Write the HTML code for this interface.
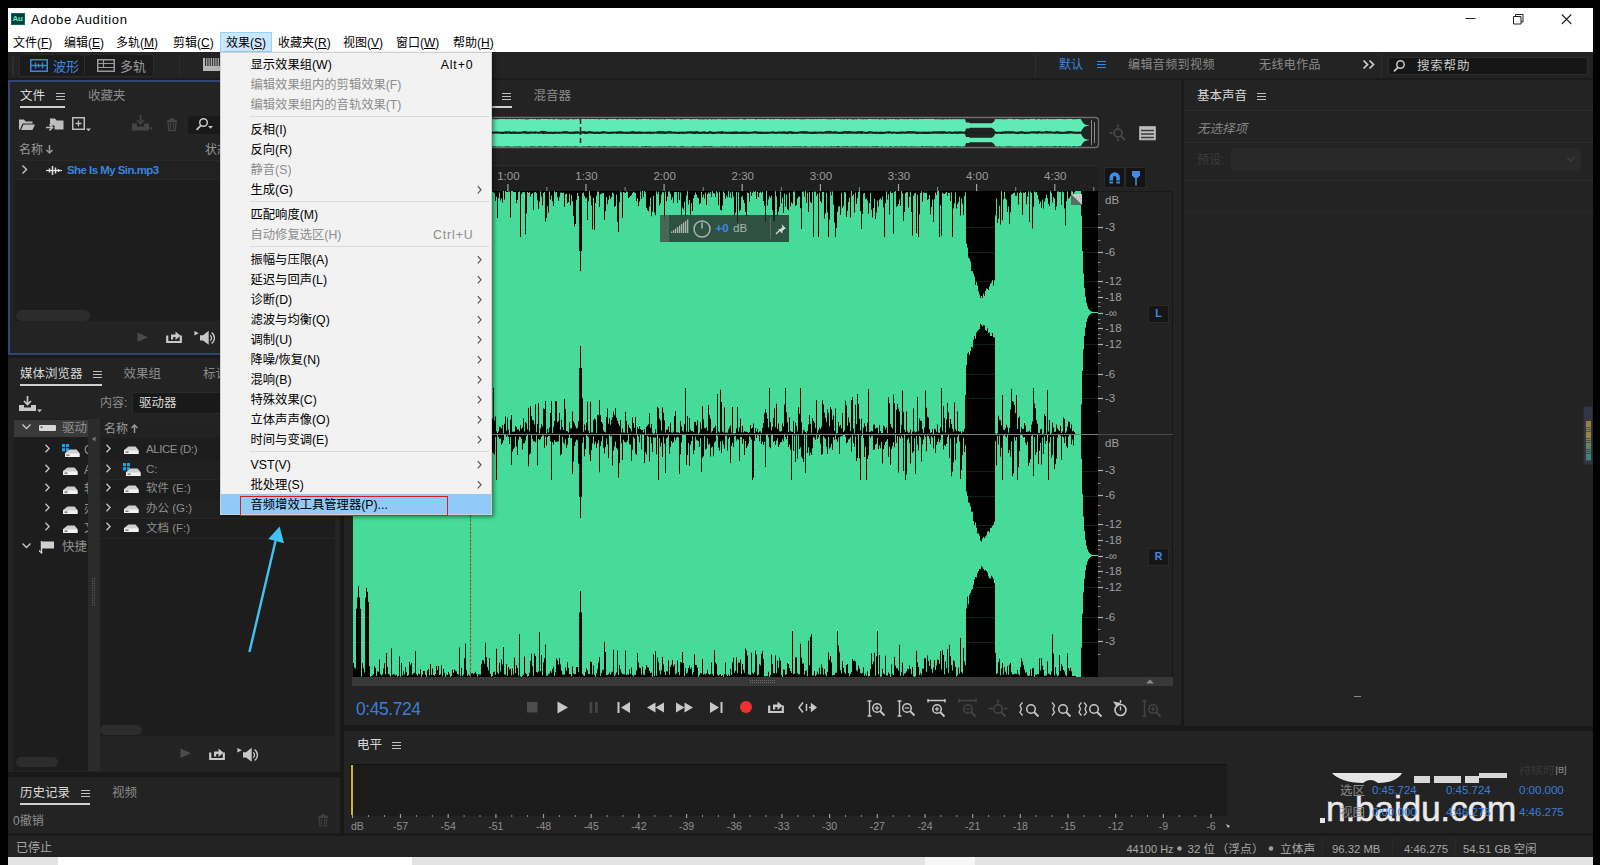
<!DOCTYPE html>
<html lang="zh-CN"><head><meta charset="utf-8"><title>Adobe Audition</title>
<style>
html,body{margin:0;padding:0;background:#000;}
body{width:1600px;height:865px;position:relative;overflow:hidden;font-family:"Liberation Sans","Noto Sans CJK SC",sans-serif;}
body>div,body>span,body>svg{position:absolute;display:block;}
span{white-space:nowrap;}
</style></head><body>
<div style="left:8px;top:8px;width:1585px;height:849px;background:#191919;"></div>
<div style="left:8px;top:8px;width:1585px;height:44px;background:#ffffff;"></div>
<div style="left:11px;top:13px;width:14px;height:12px;background:#00403a;border:1px solid #0a6b5e;box-sizing:border-box;"></div>
<span style="left:12.5px;top:14px;font-size:8px;line-height:10px;color:#5fe3c0;font-weight:bold;letter-spacing:-0.3px;">Au</span>
<span style="left:31px;top:10px;font-size:13px;line-height:19px;color:#000;letter-spacing:0.65px;">Adobe Audition</span>
<svg style="left:1460px;top:10px;" width="120" height="20" viewBox="0 0 120 20"><path d="M5.500 8.500h10" stroke="#222" stroke-width="1" fill="none"/><path d="M53.500 6.500h7.500v7.500h-7.500z M55.500 6.500v-2h7.500v7.500h-2" stroke="#222" stroke-width="1" fill="none"/><path d="M101.800 4.500l9.500 9.500 M111.300 4.500l-9.500 9.500" stroke="#222" stroke-width="1.100" fill="none"/></svg>
<div style="left:220px;top:32px;width:52px;height:20px;background:#cce8ff;border:1px solid #99d1ff;box-sizing:border-box;"></div>
<span style="left:13px;top:33.6px;font-size:12px;line-height:18px;color:#000;">文件(<u>F</u>)</span>
<span style="left:64px;top:33.6px;font-size:12px;line-height:18px;color:#000;">编辑(<u>E</u>)</span>
<span style="left:116px;top:33.6px;font-size:12px;line-height:18px;color:#000;">多轨(<u>M</u>)</span>
<span style="left:173px;top:33.6px;font-size:12px;line-height:18px;color:#000;">剪辑(<u>C</u>)</span>
<span style="left:226px;top:33.6px;font-size:12px;line-height:18px;color:#000;">效果(<u>S</u>)</span>
<span style="left:278px;top:33.6px;font-size:12px;line-height:18px;color:#000;">收藏夹(<u>R</u>)</span>
<span style="left:343px;top:33.6px;font-size:12px;line-height:18px;color:#000;">视图(<u>V</u>)</span>
<span style="left:396px;top:33.6px;font-size:12px;line-height:18px;color:#000;">窗口(<u>W</u>)</span>
<span style="left:453px;top:33.6px;font-size:12px;line-height:18px;color:#000;">帮助(<u>H</u>)</span>
<div style="left:8px;top:52px;width:1585px;height:28px;background:#232323;"></div>
<div style="left:12px;top:57px;width:2px;height:18px;background:#2e2e2e;"></div>
<div style="left:19px;top:54px;width:135px;height:23px;background:#1b1b1b;border:1px solid #2b2b2b;box-sizing:border-box;border-radius:2px;"></div>
<div style="left:84px;top:55px;width:1px;height:20px;background:#2f2f2f;"></div>
<svg style="left:30px;top:59px;" width="18" height="13" viewBox="0 0 18 13"><rect x="0.75" y="0.75" width="16.5" height="11.5" fill="none" stroke="#3b86e0" stroke-width="1.5"/><path d="M1 6.500h16 M5.500 3.500v6 M8.500 4.500v4 M12.500 3.500v6" stroke="#3b86e0" stroke-width="1.3" fill="none"/></svg>
<span style="left:53px;top:56.5px;font-size:13px;line-height:19px;color:#3b86e0;">波形</span>
<svg style="left:97px;top:59px;" width="18" height="13" viewBox="0 0 18 13"><rect x="0.75" y="0.75" width="16.5" height="11.5" fill="none" stroke="#9a9a9a" stroke-width="1.5"/><path d="M1 4.500h16 M1 8.500h16 M6.500 1v7" stroke="#9a9a9a" stroke-width="1.2" fill="none"/></svg>
<span style="left:120px;top:56.5px;font-size:13px;line-height:19px;color:#9a9a9a;">多轨</span>
<div style="left:179px;top:55px;width:1px;height:22px;background:#2c2c2c;"></div>
<svg style="left:203px;top:58px;" width="18" height="14" viewBox="0 0 18 14"><rect x="0" y="0" width="18" height="13" fill="#b5b5b5"/><rect x="2.0" y="0" width="1.2" height="8" fill="#333"/><rect x="4.3" y="0" width="1.2" height="8" fill="#333"/><rect x="6.6" y="0" width="1.2" height="8" fill="#333"/><rect x="8.9" y="0" width="1.2" height="8" fill="#333"/><rect x="11.2" y="0" width="1.2" height="8" fill="#333"/><rect x="13.5" y="0" width="1.2" height="8" fill="#333"/><rect x="15.8" y="0" width="1.2" height="8" fill="#333"/></svg>
<div style="left:8px;top:78px;width:1585px;height:2px;background:#1b1b1b;"></div>
<div style="left:1035px;top:54px;width:1px;height:24px;background:#2e2e2e;"></div>
<div style="left:1381px;top:54px;width:1px;height:24px;background:#2e2e2e;"></div>
<span style="left:1059px;top:56px;font-size:12px;line-height:18px;color:#3b86e0;">默认</span>
<svg style="left:1097px;top:60px;" width="10" height="10" viewBox="0 0 10 10"><path d="M0 1.500h9 M0 4.500h9 M0 7.500h9" stroke="#3b86e0" stroke-width="1.2"/></svg>
<span style="left:1128px;top:56px;font-size:12px;line-height:18px;color:#8a8a8a;letter-spacing:0.4px;">编辑音频到视频</span>
<span style="left:1259px;top:56px;font-size:12px;line-height:18px;color:#8a8a8a;letter-spacing:0.4px;">无线电作品</span>
<svg style="left:1362px;top:59px;" width="14" height="11" viewBox="0 0 14 11"><path d="M1.500 1.500l4 4-4 4 M7.500 1.500l4 4-4 4" stroke="#d0d0d0" stroke-width="1.7" fill="none"/></svg>
<div style="left:1388px;top:57px;width:200px;height:18px;background:#161616;border:1px solid #2c2c2c;box-sizing:border-box;"></div>
<svg style="left:1392px;top:59px;" width="14" height="14" viewBox="0 0 14 14"><circle cx="8.500" cy="5.500" r="3.700" fill="none" stroke="#c8c8c8" stroke-width="1.5"/><path d="M6 8.300l-4 4" stroke="#c8c8c8" stroke-width="1.8"/></svg>
<span style="left:1417px;top:57.25px;font-size:12.5px;line-height:18.5px;color:#c8c8c8;letter-spacing:0.8px;">搜索帮助</span>
<div style="left:8px;top:836px;width:1585px;height:21px;background:#232323;"></div>
<span style="left:16px;top:839px;font-size:12px;line-height:18px;color:#a7a7a7;">已停止</span>
<span style="left:1126.5px;top:841px;font-size:11px;line-height:17px;color:#a7a7a7;">44100 Hz</span>
<span style="left:1187.5px;top:840.75px;font-size:11.5px;line-height:17.5px;color:#a7a7a7;">32 位</span>
<span style="left:1216.5px;top:840.6px;font-size:11.8px;line-height:17.8px;color:#a7a7a7;">（浮点）</span>
<span style="left:1280px;top:840.6px;font-size:11.8px;line-height:17.8px;color:#a7a7a7;">立体声</span>
<svg style="left:1176px;top:845px;" width="100" height="8" viewBox="0 0 100 8"><circle cx="3.500" cy="3.500" r="2.300" fill="#a0a0a0"/><circle cx="95" cy="3.500" r="2.300" fill="#a0a0a0"/></svg>
<span style="left:1332px;top:840.85px;font-size:11.3px;line-height:17.3px;color:#a7a7a7;">96.32 MB</span>
<span style="left:1404px;top:840.85px;font-size:11.3px;line-height:17.3px;color:#a7a7a7;">4:46.275</span>
<span style="left:1463px;top:840.85px;font-size:11.3px;line-height:17.3px;color:#a7a7a7;">54.51 GB 空闲</span>
<div style="left:1322px;top:839px;width:1px;height:16px;background:#292929;"></div>
<div style="left:1392px;top:839px;width:1px;height:16px;background:#292929;"></div>
<div style="left:1455px;top:839px;width:1px;height:16px;background:#292929;"></div>
<div style="left:8px;top:857px;width:1585px;height:8px;background:#e3e3e3;"></div>
<div style="left:58px;top:857px;width:354px;height:8px;background:#ffffff;"></div>
<div style="left:925px;top:857px;width:50px;height:8px;background:#f6f6f6;"></div>
<div style="left:8px;top:80px;width:332px;height:275px;background:#232323;border:2px solid #2a4872;box-sizing:border-box;"></div>
<span style="left:20px;top:86.75px;font-size:12.5px;line-height:18.5px;color:#d8d8d8;">文件</span>
<div style="left:20px;top:106px;width:45px;height:2px;background:#d0d0d0;"></div>
<svg style="left:56px;top:92px;" width="10" height="10" viewBox="0 0 10 10"><path d="M0 1.500h9 M0 4.500h9 M0 7.500h9" stroke="#c0c0c0" stroke-width="1.1"/></svg>
<span style="left:88px;top:86.75px;font-size:12.5px;line-height:18.5px;color:#8c8c8c;">收藏夹</span>
<svg style="left:18px;top:116.3px;" width="18" height="15" viewBox="0 0 18 15"><path d="M1 3.500h5l1.500 2h7v2h-10l-2.500 6h-1z" fill="#bdbdbd"/><path d="M5.500 8.500h11.500l-2.500 5.500h-11.500z" fill="#bdbdbd"/></svg>
<svg style="left:45px;top:116.3px;" width="20" height="16" viewBox="0 0 20 16"><path d="M5 2.500h5l1.500 2h7v9h-9v-4h-4.500z" fill="#bdbdbd"/><path d="M1 11.500h6 M4.500 8.500l3 3-3 3" stroke="#bdbdbd" stroke-width="1.6" fill="none"/></svg>
<svg style="left:72px;top:117.3px;" width="22" height="15" viewBox="0 0 22 15"><rect x="0.75" y="0.75" width="11.500" height="11.500" fill="none" stroke="#bdbdbd" stroke-width="1.500"/><path d="M6.500 3.500v6 M3.500 6.500h6" stroke="#bdbdbd" stroke-width="1.3"/><path d="M14 11.500h5l-2.500 2.700z" fill="#bdbdbd"/></svg>
<svg style="left:130px;top:114.3px;" width="24" height="18" viewBox="0 0 24 18"><path d="M10.500 1v8 M7 6l3.500 3.500 3.500-3.500" stroke="#454545" stroke-width="1.6" fill="none"/><path d="M2 9.500h5v3h7v-3h5v7h-17z" fill="#454545"/><path d="M19 13.500h4l-2 2.500z" fill="#454545"/></svg>
<svg style="left:165px;top:116.3px;" width="14" height="16" viewBox="0 0 14 16"><path d="M2 4.500h10 M5 3h4" stroke="#454545" stroke-width="1.400"/><path d="M3 5.500h8l-0.800 9h-6.400z" fill="none" stroke="#454545" stroke-width="1.300"/><path d="M5.500 7v6 M8.500 7v6" stroke="#454545" stroke-width="1"/></svg>
<div style="left:188px;top:115.5px;width:40px;height:18.5px;background:#191919;border-radius:3px;"></div>
<svg style="left:194px;top:116.5px;" width="24" height="15" viewBox="0 0 24 15"><circle cx="9.500" cy="5.500" r="3.800" fill="none" stroke="#c8c8c8" stroke-width="1.500"/><path d="M7 8.300l-4.500 4.500" stroke="#c8c8c8" stroke-width="1.800"/><path d="M14 9h5l-2.500 2.700z" fill="#c8c8c8"/></svg>
<span style="left:19px;top:140.5px;font-size:12px;line-height:18px;color:#999;">名称</span>
<svg style="left:45px;top:144px;" width="10" height="11" viewBox="0 0 10 11"><path d="M4.500 1v8 M1.500 6l3 3 3-3" stroke="#999" stroke-width="1.500" fill="none"/></svg>
<span style="left:205px;top:140.5px;font-size:12px;line-height:18px;color:#999;">状态</span>
<div style="left:15px;top:160px;width:320px;height:161px;background:#1d1d1d;"></div>
<div style="left:15px;top:160px;width:320px;height:1px;background:#2a2a2a;"></div>
<div style="left:15px;top:161px;width:320px;height:18px;background:#212121;"></div>
<div style="left:15px;top:179px;width:320px;height:1px;background:#262626;"></div>
<svg style="left:21px;top:164px;" width="8" height="11" viewBox="0 0 8 11"><path d="M1.500 1.500l4 4-4 4" stroke="#c8c8c8" stroke-width="1.400" fill="none"/></svg>
<svg style="left:46px;top:165px;" width="16" height="11" viewBox="0 0 16 11"><path d="M0 5.500h16" stroke="#e0e0e0" stroke-width="1.200"/><path d="M3.500 3.500v4 M6.500 1v9 M9.500 2.500v6 M12.500 4v3" stroke="#e0e0e0" stroke-width="1.500"/></svg>
<span style="left:67px;top:161.75px;font-size:11.5px;line-height:17.5px;color:#3a84dc;font-weight:bold;letter-spacing:-0.550px;">She Is My Sin.mp3</span>
<div style="left:16px;top:310px;width:74px;height:11px;background:#2c2c2c;border-radius:6px;"></div>
<svg style="left:137px;top:331.5px;" width="12" height="12" viewBox="0 0 12 12"><path d="M0.500 0.500l10.500 4.800-10.500 4.800z" fill="#4b4b4b"/></svg>
<svg style="left:166px;top:329.5px;" width="16" height="14" viewBox="0 0 16 14"><path d="M1.200 5.500v6.500h13.600v-6.500" fill="none" stroke="#c8c8c8" stroke-width="2.200"/><path d="M5 9.500v-5h4.500v-3l5 4.300-5 4.300v-3h-2.300v2.400z" fill="#c8c8c8"/></svg>
<svg style="left:194px;top:330.3px;" width="24" height="16" viewBox="0 0 24 16"><path d="M0.400 1l4.400 2.200-4.400 2.200z" fill="#c8c8c8"/><path d="M6 5.200h3l5.700-4.400v14l-5.700-4.400h-3z" fill="#c8c8c8"/><path d="M16.200 5.300a3.400 3.400 0 0 1 0 5.400 M17.600 2.600a6.600 6.600 0 0 1 0 10.800" fill="none" stroke="#c8c8c8" stroke-width="1.300"/></svg>
<div style="left:8px;top:358px;width:332px;height:414px;background:#232323;"></div>
<span style="left:20px;top:365.25px;font-size:12.5px;line-height:18.5px;color:#d8d8d8;">媒体浏览器</span>
<div style="left:20px;top:384px;width:82px;height:2px;background:#d0d0d0;"></div>
<svg style="left:93px;top:370px;" width="10" height="10" viewBox="0 0 10 10"><path d="M0 1.500h9 M0 4.500h9 M0 7.500h9" stroke="#c0c0c0" stroke-width="1.1"/></svg>
<span style="left:123.5px;top:365.25px;font-size:12.5px;line-height:18.5px;color:#8c8c8c;">效果组</span>
<span style="left:203px;top:365.25px;font-size:12.5px;line-height:18.5px;color:#8c8c8c;">标记</span>
<svg style="left:18px;top:395px;" width="26" height="18" viewBox="0 0 26 18"><path d="M9.500 1v8 M6 6l3.500 3.500 3.500-3.500" stroke="#c8c8c8" stroke-width="1.700" fill="none"/><path d="M1 10h5v2.500h7v-2.500h5v6h-17z" fill="#c8c8c8"/><path d="M19 14.500h5l-2.500 2.700z" fill="#c8c8c8"/></svg>
<span style="left:100px;top:394px;font-size:12px;line-height:18px;color:#8c8c8c;">内容:</span>
<div style="left:132px;top:392px;width:204px;height:22px;background:#191919;border:1px solid #2a2a2a;box-sizing:border-box;border-radius:2px;"></div>
<span style="left:139px;top:393.75px;font-size:12.5px;line-height:18.5px;color:#d8d8d8;">驱动器</span>
<div style="left:14px;top:419px;width:74px;height:352px;background:#1d1d1d;"></div>
<div style="left:14px;top:420px;width:74px;height:17px;background:#3a3a3a;"></div>
<div style="left:88px;top:419px;width:12px;height:352px;background:#2b2b2b;"></div>
<svg style="left:91px;top:436px;" width="6" height="6" viewBox="0 0 6 6"><path d="M4.500 0.500v5l-3.500-2.500z" fill="#777"/></svg>
<svg style="left:92px;top:578px;" width="4" height="30" viewBox="0 0 4 30"><rect x="0" y="0.0" width="1" height="1.200" fill="#5a5a5a"/><rect x="2" y="0.0" width="1" height="1.200" fill="#5a5a5a"/><rect x="0" y="2.4" width="1" height="1.200" fill="#5a5a5a"/><rect x="2" y="2.4" width="1" height="1.200" fill="#5a5a5a"/><rect x="0" y="4.8" width="1" height="1.200" fill="#5a5a5a"/><rect x="2" y="4.8" width="1" height="1.200" fill="#5a5a5a"/><rect x="0" y="7.2" width="1" height="1.200" fill="#5a5a5a"/><rect x="2" y="7.2" width="1" height="1.200" fill="#5a5a5a"/><rect x="0" y="9.6" width="1" height="1.200" fill="#5a5a5a"/><rect x="2" y="9.6" width="1" height="1.200" fill="#5a5a5a"/><rect x="0" y="12.0" width="1" height="1.200" fill="#5a5a5a"/><rect x="2" y="12.0" width="1" height="1.200" fill="#5a5a5a"/><rect x="0" y="14.4" width="1" height="1.200" fill="#5a5a5a"/><rect x="2" y="14.4" width="1" height="1.200" fill="#5a5a5a"/><rect x="0" y="16.8" width="1" height="1.200" fill="#5a5a5a"/><rect x="2" y="16.8" width="1" height="1.200" fill="#5a5a5a"/><rect x="0" y="19.2" width="1" height="1.200" fill="#5a5a5a"/><rect x="2" y="19.2" width="1" height="1.200" fill="#5a5a5a"/><rect x="0" y="21.6" width="1" height="1.200" fill="#5a5a5a"/><rect x="2" y="21.6" width="1" height="1.200" fill="#5a5a5a"/><rect x="0" y="24.0" width="1" height="1.200" fill="#5a5a5a"/><rect x="2" y="24.0" width="1" height="1.200" fill="#5a5a5a"/><rect x="0" y="26.4" width="1" height="1.200" fill="#5a5a5a"/><rect x="2" y="26.4" width="1" height="1.200" fill="#5a5a5a"/></svg>
<div style="left:100px;top:419px;width:235px;height:317px;background:#1d1d1d;"></div>
<div style="left:100px;top:419px;width:235px;height:19px;background:#222222;"></div>
<span style="left:104px;top:419.5px;font-size:12px;line-height:18px;color:#999;">名称</span>
<svg style="left:130px;top:423px;" width="10" height="11" viewBox="0 0 10 11"><path d="M4.500 10v-8 M1.500 5l3-3 3 3" stroke="#999" stroke-width="1.500" fill="none"/></svg>
<svg style="left:21px;top:423px;" width="12" height="8" viewBox="0 0 12 8"><path d="M1.500 1.500l4 4 4-4" stroke="#c8c8c8" stroke-width="1.400" fill="none"/></svg>
<svg style="left:39px;top:425px;" width="18" height="8" viewBox="0 0 18 8"><rect x="0" y="0" width="17" height="6" rx="1" fill="#d8d8d8"/><rect x="1.500" y="1.500" width="2" height="1.500" fill="#555"/></svg>
<span style="left:62px;top:419.25px;font-size:12.5px;line-height:18.5px;color:#8f8f8f;width:26px;overflow:hidden;">驱动器</span>
<svg style="left:44px;top:443px;" width="8" height="11" viewBox="0 0 8 11"><path d="M1.500 1.800l3.600 3.700-3.600 3.700" stroke="#c8c8c8" stroke-width="1.300" fill="none"/></svg>
<svg style="left:62px;top:444px;" width="8" height="8" viewBox="0 0 8 8"><rect x="0" y="0" width="3" height="3.200" fill="#1fa0e8"/><rect x="4" y="0" width="3" height="3.200" fill="#1fa0e8"/><rect x="0" y="4.200" width="3" height="3.200" fill="#1fa0e8"/><rect x="4" y="4.200" width="3" height="3.200" fill="#1fa0e8"/></svg>
<svg style="left:64px;top:447px;" width="17" height="12" viewBox="0 0 17 12"><path d="M1 6l4.500-3.500h7l3 3.500v4h-14.500z" fill="#cfcfcf"/><path d="M1 6.500h14.500v3.500h-14.500z" fill="#f2f2f2"/><rect x="2.500" y="7.500" width="3" height="1.300" fill="#666"/></svg>
<span style="left:84px;top:441px;font-size:12px;line-height:18px;color:#8f8f8f;width:4px;overflow:hidden;">C</span>
<svg style="left:44px;top:462.6px;" width="8" height="11" viewBox="0 0 8 11"><path d="M1.500 1.800l3.600 3.700-3.600 3.700" stroke="#c8c8c8" stroke-width="1.300" fill="none"/></svg>
<svg style="left:62px;top:464.6px;" width="17" height="12" viewBox="0 0 17 12"><path d="M1 6l4.500-3.500h7l3 3.500v4h-14.500z" fill="#cfcfcf"/><path d="M1 6.500h14.500v3.500h-14.500z" fill="#f2f2f2"/><rect x="2.500" y="7.500" width="3" height="1.300" fill="#666"/></svg>
<span style="left:84px;top:460.6px;font-size:12px;line-height:18px;color:#8f8f8f;width:4px;overflow:hidden;">A</span>
<svg style="left:44px;top:482.2px;" width="8" height="11" viewBox="0 0 8 11"><path d="M1.500 1.800l3.600 3.700-3.600 3.700" stroke="#c8c8c8" stroke-width="1.300" fill="none"/></svg>
<svg style="left:62px;top:484.2px;" width="17" height="12" viewBox="0 0 17 12"><path d="M1 6l4.500-3.500h7l3 3.500v4h-14.500z" fill="#cfcfcf"/><path d="M1 6.500h14.500v3.500h-14.500z" fill="#f2f2f2"/><rect x="2.500" y="7.500" width="3" height="1.300" fill="#666"/></svg>
<span style="left:84px;top:480.2px;font-size:12px;line-height:18px;color:#8f8f8f;width:4px;overflow:hidden;">软</span>
<svg style="left:44px;top:501.8px;" width="8" height="11" viewBox="0 0 8 11"><path d="M1.500 1.800l3.600 3.700-3.600 3.700" stroke="#c8c8c8" stroke-width="1.300" fill="none"/></svg>
<svg style="left:62px;top:503.8px;" width="17" height="12" viewBox="0 0 17 12"><path d="M1 6l4.500-3.500h7l3 3.500v4h-14.500z" fill="#cfcfcf"/><path d="M1 6.500h14.500v3.500h-14.500z" fill="#f2f2f2"/><rect x="2.500" y="7.500" width="3" height="1.300" fill="#666"/></svg>
<span style="left:84px;top:499.8px;font-size:12px;line-height:18px;color:#8f8f8f;width:4px;overflow:hidden;">办</span>
<svg style="left:44px;top:521.4px;" width="8" height="11" viewBox="0 0 8 11"><path d="M1.500 1.800l3.600 3.700-3.600 3.700" stroke="#c8c8c8" stroke-width="1.300" fill="none"/></svg>
<svg style="left:62px;top:523.4px;" width="17" height="12" viewBox="0 0 17 12"><path d="M1 6l4.500-3.500h7l3 3.500v4h-14.500z" fill="#cfcfcf"/><path d="M1 6.500h14.500v3.500h-14.500z" fill="#f2f2f2"/><rect x="2.500" y="7.500" width="3" height="1.300" fill="#666"/></svg>
<span style="left:84px;top:519.4px;font-size:12px;line-height:18px;color:#8f8f8f;width:4px;overflow:hidden;">文</span>
<svg style="left:21px;top:542px;" width="12" height="8" viewBox="0 0 12 8"><path d="M1.500 1.500l4 4 4-4" stroke="#c8c8c8" stroke-width="1.400" fill="none"/></svg>
<svg style="left:39px;top:541px;" width="16" height="13" viewBox="0 0 16 13"><rect x="3" y="0.500" width="12" height="7" fill="#d0d0d0"/><path d="M2.500 0v12" stroke="#d0d0d0" stroke-width="1.500"/><path d="M0 9.500l3 3" stroke="#d0d0d0" stroke-width="1.200"/></svg>
<span style="left:62px;top:537.75px;font-size:12.5px;line-height:18.5px;color:#8f8f8f;width:26px;overflow:hidden;">快捷</span>
<div style="left:100px;top:459.5px;width:235px;height:1px;background:#272727;"></div>
<svg style="left:105px;top:443px;" width="8" height="11" viewBox="0 0 8 11"><path d="M1.500 1.800l3.600 3.700-3.600 3.700" stroke="#c8c8c8" stroke-width="1.300" fill="none"/></svg>
<svg style="left:123px;top:444px;" width="17" height="12" viewBox="0 0 17 12"><path d="M1 6l4.500-3.500h7l3 3.500v4h-14.500z" fill="#cfcfcf"/><path d="M1 6.500h14.500v3.500h-14.500z" fill="#f2f2f2"/><rect x="2.500" y="7.500" width="3" height="1.300" fill="#666"/></svg>
<span style="left:146px;top:441.25px;font-size:11.5px;line-height:17.5px;color:#8f8f8f;letter-spacing:-0.450px;">ALICE (D:)</span>
<div style="left:100px;top:479.1px;width:235px;height:1px;background:#272727;"></div>
<div style="left:100px;top:460.1px;width:235px;height:19px;background:#202020;"></div>
<svg style="left:105px;top:462.6px;" width="8" height="11" viewBox="0 0 8 11"><path d="M1.500 1.800l3.600 3.700-3.600 3.700" stroke="#c8c8c8" stroke-width="1.300" fill="none"/></svg>
<svg style="left:123px;top:462.6px;" width="8" height="8" viewBox="0 0 8 8"><rect x="0" y="0" width="3" height="3.200" fill="#1fa0e8"/><rect x="4" y="0" width="3" height="3.200" fill="#1fa0e8"/><rect x="0" y="4.200" width="3" height="3.200" fill="#1fa0e8"/><rect x="4" y="4.200" width="3" height="3.200" fill="#1fa0e8"/></svg>
<svg style="left:125px;top:465.6px;" width="17" height="12" viewBox="0 0 17 12"><path d="M1 6l4.500-3.500h7l3 3.500v4h-14.500z" fill="#cfcfcf"/><path d="M1 6.500h14.500v3.500h-14.500z" fill="#f2f2f2"/><rect x="2.500" y="7.500" width="3" height="1.300" fill="#666"/></svg>
<span style="left:146px;top:460.85px;font-size:11.5px;line-height:17.5px;color:#8f8f8f;">C:</span>
<div style="left:100px;top:498.7px;width:235px;height:1px;background:#272727;"></div>
<svg style="left:105px;top:482.2px;" width="8" height="11" viewBox="0 0 8 11"><path d="M1.500 1.800l3.600 3.700-3.600 3.700" stroke="#c8c8c8" stroke-width="1.300" fill="none"/></svg>
<svg style="left:123px;top:483.2px;" width="17" height="12" viewBox="0 0 17 12"><path d="M1 6l4.500-3.500h7l3 3.500v4h-14.500z" fill="#cfcfcf"/><path d="M1 6.500h14.500v3.500h-14.500z" fill="#f2f2f2"/><rect x="2.500" y="7.500" width="3" height="1.300" fill="#666"/></svg>
<span style="left:146px;top:480.45px;font-size:11.5px;line-height:17.5px;color:#8f8f8f;">软件 (E:)</span>
<div style="left:100px;top:518.3px;width:235px;height:1px;background:#272727;"></div>
<div style="left:100px;top:499.3px;width:235px;height:19px;background:#202020;"></div>
<svg style="left:105px;top:501.8px;" width="8" height="11" viewBox="0 0 8 11"><path d="M1.500 1.800l3.600 3.700-3.600 3.700" stroke="#c8c8c8" stroke-width="1.300" fill="none"/></svg>
<svg style="left:123px;top:502.8px;" width="17" height="12" viewBox="0 0 17 12"><path d="M1 6l4.500-3.500h7l3 3.500v4h-14.500z" fill="#cfcfcf"/><path d="M1 6.500h14.500v3.500h-14.500z" fill="#f2f2f2"/><rect x="2.500" y="7.500" width="3" height="1.300" fill="#666"/></svg>
<span style="left:146px;top:500.05px;font-size:11.5px;line-height:17.5px;color:#8f8f8f;">办公 (G:)</span>
<div style="left:100px;top:537.9px;width:235px;height:1px;background:#272727;"></div>
<svg style="left:105px;top:521.4px;" width="8" height="11" viewBox="0 0 8 11"><path d="M1.500 1.800l3.600 3.700-3.600 3.700" stroke="#c8c8c8" stroke-width="1.300" fill="none"/></svg>
<svg style="left:123px;top:522.4px;" width="17" height="12" viewBox="0 0 17 12"><path d="M1 6l4.500-3.500h7l3 3.500v4h-14.500z" fill="#cfcfcf"/><path d="M1 6.500h14.500v3.500h-14.500z" fill="#f2f2f2"/><rect x="2.500" y="7.500" width="3" height="1.300" fill="#666"/></svg>
<span style="left:146px;top:519.65px;font-size:11.5px;line-height:17.5px;color:#8f8f8f;">文档 (F:)</span>
<div style="left:100px;top:725px;width:42px;height:10px;background:#2c2c2c;border-radius:5px;"></div>
<div style="left:16px;top:757px;width:42px;height:10px;background:#2c2c2c;border-radius:5px;"></div>
<svg style="left:180px;top:748.3px;" width="12" height="12" viewBox="0 0 12 12"><path d="M0.500 0.500l10.500 4.800-10.500 4.800z" fill="#4b4b4b"/></svg>
<svg style="left:209px;top:747px;" width="16" height="14" viewBox="0 0 16 14"><path d="M1.200 5.500v6.500h13.600v-6.500" fill="none" stroke="#c8c8c8" stroke-width="2.200"/><path d="M5 9.500v-5h4.500v-3l5 4.300-5 4.300v-3h-2.300v2.400z" fill="#c8c8c8"/></svg>
<svg style="left:237px;top:747.3px;" width="24" height="16" viewBox="0 0 24 16"><path d="M0.400 1l4.400 2.200-4.400 2.200z" fill="#c8c8c8"/><path d="M6 5.200h3l5.700-4.400v14l-5.700-4.400h-3z" fill="#c8c8c8"/><path d="M16.200 5.300a3.400 3.400 0 0 1 0 5.400 M17.600 2.600a6.600 6.600 0 0 1 0 10.800" fill="none" stroke="#c8c8c8" stroke-width="1.300"/></svg>
<div style="left:8px;top:777px;width:332px;height:56px;background:#232323;"></div>
<span style="left:20px;top:784.25px;font-size:12.5px;line-height:18.5px;color:#d8d8d8;">历史记录</span>
<div style="left:20px;top:803px;width:70px;height:2px;background:#d0d0d0;"></div>
<svg style="left:81px;top:789px;" width="10" height="10" viewBox="0 0 10 10"><path d="M0 1.500h9 M0 4.500h9 M0 7.500h9" stroke="#c0c0c0" stroke-width="1.1"/></svg>
<span style="left:112px;top:784.25px;font-size:12.5px;line-height:18.5px;color:#8c8c8c;">视频</span>
<span style="left:13px;top:811.5px;font-size:12px;line-height:18px;color:#8f8f8f;">0撤销</span>
<svg style="left:317px;top:813px;" width="12" height="14" viewBox="0 0 12 14"><path d="M1 3.500h10 M4 2h4" stroke="#3f3f3f" stroke-width="1.300"/><path d="M2.200 4.500h7.600l-0.700 8.500h-6.200z" fill="none" stroke="#3f3f3f" stroke-width="1.200"/><path d="M4.500 6v5.500 M7.500 6v5.500" stroke="#3f3f3f" stroke-width="1"/></svg>
<div style="left:344px;top:80px;width:837px;height:645px;background:#232323;"></div>
<span style="left:356px;top:86.75px;font-size:12.5px;line-height:18.5px;color:#d8d8d8;width:134px;overflow:hidden;">编辑器: She Is My Sin.mp3</span>
<div style="left:356px;top:106px;width:156px;height:2px;background:#d0d0d0;"></div>
<svg style="left:501.5px;top:92px;" width="10" height="10" viewBox="0 0 10 10"><path d="M0 1.500h9 M0 4.500h9 M0 7.500h9" stroke="#c0c0c0" stroke-width="1.1"/></svg>
<span style="left:533.5px;top:86.75px;font-size:12.5px;line-height:18.5px;color:#8c8c8c;">混音器</span>
<svg style="left:0;top:0" width="1600" height="865" viewBox="0 0 1600 865"><rect x="353" y="191" width="745" height="486" fill="#000"/><path d="M353 227.500H1098" stroke="#10241b" stroke-width="1"/><path d="M353 252.500H1098" stroke="#10241b" stroke-width="1"/><path d="M353 281.500H1098" stroke="#10241b" stroke-width="1"/><path d="M353 344.500H1098" stroke="#10241b" stroke-width="1"/><path d="M353 374.500H1098" stroke="#10241b" stroke-width="1"/><path d="M353 398.500H1098" stroke="#10241b" stroke-width="1"/><path d="M353 471.500H1098" stroke="#10241b" stroke-width="1"/><path d="M353 496.500H1098" stroke="#10241b" stroke-width="1"/><path d="M353 525.500H1098" stroke="#10241b" stroke-width="1"/><path d="M353 587.500H1098" stroke="#10241b" stroke-width="1"/><path d="M353 617.500H1098" stroke="#10241b" stroke-width="1"/><path d="M353 642.500H1098" stroke="#10241b" stroke-width="1"/><path d="M353,312.5V220.3h1V192.0h1V192.0h1V192.2h1V236.7h1V221.6h1V191.7h1V198.3h1V203.9h1V195.9h1V193.8h1V195.4h1V213.2h1V211.5h1V236.1h1V191.1h1V196.0h1V195.6h1V194.8h1V194.4h1V191.3h1V195.3h1V216.4h1V191.8h1V191.2h1V191.5h1V192.6h1V191.5h1V191.9h1V192.1h1V191.3h1V206.3h1V191.4h1V224.8h1V191.5h1V192.6h1V191.4h1V212.5h1V205.2h1V197.5h1V200.7h1V191.7h1V192.3h1V192.1h1V218.2h1V214.9h1V201.7h1V192.8h1V192.6h1V192.4h1V191.8h1V192.1h1V192.2h1V192.3h1V207.1h1V201.0h1V202.6h1V191.5h1V192.2h1V203.5h1V200.4h1V191.9h1V198.5h1V195.8h1V193.8h1V192.7h1V194.9h1V197.4h1V212.1h1V192.3h1V191.1h1V208.9h1V211.4h1V202.2h1V192.3h1V192.9h1V192.1h1V195.9h1V202.9h1V191.8h1V191.2h1V202.1h1V215.0h1V204.5h1V192.4h1V217.8h1V210.2h1V192.8h1V200.0h1V210.2h1V202.2h1V199.3h1V192.7h1V192.0h1V195.2h1V212.7h1V212.1h1V191.4h1V194.5h1V223.5h1V209.8h1V192.0h1V226.7h1V212.8h1V192.6h1V202.2h1V209.6h1V191.5h1V191.7h1V200.3h1V197.7h1V197.4h1V194.6h1V192.7h1V191.5h1V197.0h1V191.4h1V205.5h1V191.2h1V198.3h1V203.7h1V200.7h1V192.0h1V191.6h1V193.8h1V191.4h1V193.6h1V191.9h1V198.1h1V195.3h1V206.2h1V229.5h1V192.6h1V202.3h1V193.0h1V192.8h1V217.6h1V214.0h1V191.8h1V191.8h1V192.3h1V192.9h1V200.7h1V196.6h1V218.0h1V198.1h1V192.5h1V200.6h1V198.6h1V202.6h1V191.1h1V199.5h1V191.1h1V192.1h1V191.9h1V191.6h1V191.5h1V217.6h1V191.1h1V191.1h1V192.0h1V192.0h1V191.9h1V203.0h1V199.7h1V191.9h1V191.5h1V237.0h1V193.8h1V192.6h1V192.1h1V192.2h1V234.3h1V213.2h1V191.9h1V193.1h1V192.1h1V196.6h1V194.1h1V193.2h1V210.1h1V192.3h1V192.1h1V193.0h1V200.3h1V208.8h1V201.4h1V191.6h1V196.4h1V205.3h1V192.8h1V191.9h1V221.6h1V217.7h1V206.3h1V212.5h1V191.4h1V199.5h1V195.4h1V201.3h1V205.9h1V191.2h1V192.5h1V191.9h1V197.1h1V200.8h1V196.7h1V192.7h1V192.6h1V192.9h1V192.4h1V206.7h1V194.3h1V193.5h1V203.1h1V201.9h1V194.1h1V205.3h1V195.1h1V201.3h1V216.0h1V226.3h1V223.9h1V199.7h1V193.0h1V196.1h1V251.0h1V271.0h1V251.0h1V193.3h1V192.6h1V196.1h1V198.2h1V197.7h1V219.9h1V201.3h1V191.3h1V195.6h1V205.2h1V229.3h1V197.5h1V230.1h1V203.1h1V195.6h1V191.8h1V191.4h1V207.0h1V194.3h1V193.8h1V193.2h1V193.1h1V219.7h1V211.1h1V197.1h1V204.3h1V199.8h1V195.6h1V199.0h1V197.0h1V192.5h1V193.4h1V206.8h1V205.9h1V194.5h1V221.5h1V231.9h1V201.9h1V191.5h1V192.6h1V217.7h1V192.1h1V192.5h1V193.0h1V191.6h1V191.8h1V198.0h1V196.9h1V196.0h1V194.9h1V193.0h1V191.8h1V192.5h1V193.0h1V201.0h1V198.3h1V205.9h1V201.5h1V191.6h1V198.9h1V191.1h1V197.0h1V191.1h1V192.3h1V207.7h1V210.1h1V211.2h1V206.6h1V197.5h1V216.3h1V211.3h1V195.8h1V212.8h1V215.2h1V191.4h1V194.0h1V191.6h1V205.5h1V203.3h1V194.6h1V192.3h1V192.3h1V220.2h1V191.6h1V201.2h1V196.7h1V191.5h1V191.6h1V193.8h1V199.8h1V197.2h1V202.8h1V192.3h1V192.0h1V192.0h1V202.9h1V191.9h1V200.0h1V192.6h1V215.1h1V207.4h1V209.5h1V201.5h1V215.9h1V195.6h1V191.2h1V204.4h1V199.9h1V214.8h1V203.0h1V211.0h1V198.3h1V195.1h1V192.5h1V194.5h1V197.4h1V197.9h1V204.2h1V203.1h1V191.8h1V197.3h1V194.6h1V198.5h1V192.4h1V204.7h1V193.8h1V192.4h1V193.4h1V191.7h1V197.1h1V191.2h1V193.2h1V193.3h1V197.1h1V191.3h1V192.5h1V205.1h1V191.8h1V209.7h1V210.5h1V205.5h1V191.4h1V192.9h1V198.4h1V195.5h1V197.2h1V191.3h1V197.2h1V192.2h1V197.9h1V191.7h1V196.5h1V215.5h1V212.4h1V191.9h1V223.1h1V192.3h1V211.3h1V210.1h1V196.9h1V195.8h1V200.1h1V203.0h1V211.8h1V215.6h1V192.4h1V192.9h1V201.4h1V191.6h1V195.8h1V192.7h1V191.2h1V191.9h1V191.3h1V198.9h1V191.8h1V196.9h1V192.7h1V191.8h1V192.7h1V191.8h1V201.1h1V205.7h1V222.1h1V191.1h1V205.5h1V199.2h1V196.0h1V198.1h1V195.4h1V210.1h1V221.2h1V220.9h1V191.3h1V196.5h1V215.7h1V211.4h1V207.1h1V191.8h1V202.9h1V197.6h1V212.7h1V193.4h1V206.6h1V194.6h1V209.3h1V210.3h1V192.5h1V206.3h1V202.3h1V203.5h1V191.7h1V191.6h1V206.1h1V205.0h1V198.6h1V196.7h1V196.4h1V208.2h1V229.1h1V191.8h1V191.5h1V196.5h1V191.3h1V202.8h1V192.7h1V212.1h1V191.9h1V201.9h1V202.9h1V192.2h1V237.0h1V191.6h1V191.8h1V195.9h1V193.8h1V237.0h1V192.7h1V201.1h1V202.7h1V192.1h1V191.9h1V218.5h1V213.3h1V192.7h1V212.2h1V237.0h1V219.5h1V191.4h1V195.2h1V191.6h1V204.4h1V222.4h1V237.0h1V228.0h1V211.8h1V206.4h1V206.3h1V214.8h1V192.7h1V207.8h1V205.7h1V191.9h1V192.4h1V216.7h1V210.7h1V201.9h1V197.6h1V217.4h1V191.0h1V195.9h1V194.2h1V212.4h1V192.4h1V203.7h1V198.1h1V191.8h1V191.3h1V210.8h1V229.1h1V213.9h1V193.4h1V193.1h1V199.2h1V198.4h1V200.4h1V213.6h1V203.1h1V192.7h1V209.8h1V217.6h1V208.1h1V198.6h1V219.1h1V212.5h1V200.5h1V206.6h1V199.5h1V198.2h1V199.8h1V196.6h1V207.2h1V237.0h1V202.9h1V191.6h1V199.6h1V194.3h1V214.2h1V191.6h1V193.0h1V192.7h1V233.8h1V192.1h1V191.0h1V206.8h1V206.0h1V203.9h1V199.2h1V205.8h1V191.2h1V193.5h1V221.0h1V211.9h1V193.1h1V192.3h1V192.0h1V207.5h1V196.8h1V191.7h1V212.1h1V235.5h1V195.7h1V193.5h1V192.7h1V233.1h1V194.8h1V237.0h1V214.3h1V192.9h1V191.2h1V201.8h1V192.5h1V192.8h1V192.9h1V192.7h1V200.0h1V199.0h1V195.1h1V214.3h1V206.8h1V199.6h1V221.9h1V199.2h1V192.5h1V195.0h1V191.2h1V191.1h1V237.0h1V204.8h1V235.8h1V192.7h1V193.4h1V194.1h1V192.7h1V192.1h1V195.8h1V192.9h1V192.9h1V200.9h1V192.2h1V237.0h1V208.3h1V203.3h1V192.2h1V208.4h1V204.1h1V202.0h1V196.7h1V215.4h1V198.5h1V203.4h1V215.1h1V195.9h1V192.3h1V243.4h1V247.5h1V257.6h1V258.8h1V261.6h1V271.2h1V270.9h1V273.8h1V276.4h1V284.8h1V281.9h1V285.6h1V291.3h1V294.5h1V298.0h1V296.1h1V297.8h1V293.6h1V296.1h1V291.0h1V288.6h1V288.9h1V290.1h1V286.6h1V283.7h1V282.5h1V280.0h1V285.6h1V280.2h1V215.3h1V198.6h1V223.0h1V218.4h1V205.7h1V224.6h1V191.2h1V220.3h1V199.3h1V192.1h1V198.4h1V199.4h1V212.0h1V206.5h1V223.9h1V212.2h1V194.4h1V194.1h1V192.9h1V192.6h1V195.7h1V195.7h1V192.2h1V204.4h1V193.0h1V191.4h1V193.0h1V214.7h1V192.6h1V192.9h1V192.0h1V204.3h1V196.6h1V191.4h1V221.7h1V191.6h1V192.9h1V228.6h1V207.1h1V191.4h1V192.2h1V192.1h1V194.8h1V199.2h1V203.8h1V201.4h1V208.0h1V199.5h1V208.5h1V201.5h1V198.2h1V194.6h1V198.0h1V204.0h1V205.9h1V191.3h1V193.0h1V202.5h1V197.0h1V198.5h1V210.0h1V206.3h1V191.6h1V191.6h1V191.9h1V191.8h1V204.8h1V191.6h1V192.3h1V208.5h1V225.6h1V201.0h1V191.6h1V198.6h1V197.7h1V196.0h1V191.2h1V191.4h1V195.0h1V192.5h1V191.0h1V191.0h1V191.0h1V191.0h1V191.0h1V191.0h1V215.7h1V251.1h1V273.5h1V287.7h1V296.8h1V302.5h1V306.2h1V308.5h1V309.9h1V310.9h1V311.5h1V311.8h1V311.9h1V311.9h1V311.9h1V311.9h1V311.9h1V312.5V313.1h-1V313.1h-1V313.1h-1V313.1h-1V313.1h-1V313.1h-1V313.5h-1V314.0h-1V314.9h-1V316.3h-1V318.5h-1V322.0h-1V327.4h-1V336.0h-1V349.5h-1V370.9h-1V404.5h-1V434.0h-1V434.0h-1V434.0h-1V434.0h-1V434.0h-1V433.7h-1V432.0h-1V430.7h-1V431.3h-1V424.6h-1V428.4h-1V422.1h-1V421.6h-1V426.7h-1V431.6h-1V433.0h-1V419.1h-1V417.4h-1V431.6h-1V433.1h-1V425.7h-1V431.0h-1V429.8h-1V428.5h-1V424.8h-1V431.7h-1V432.1h-1V427.5h-1V422.4h-1V432.9h-1V433.9h-1V420.1h-1V431.5h-1V390.1h-1V433.5h-1V415.9h-1V414.3h-1V433.2h-1V433.9h-1V428.7h-1V429.5h-1V433.0h-1V433.1h-1V423.8h-1V420.2h-1V408.2h-1V403.4h-1V388.0h-1V421.4h-1V424.7h-1V432.3h-1V430.7h-1V431.4h-1V431.7h-1V432.1h-1V425.6h-1V423.1h-1V428.9h-1V429.0h-1V427.3h-1V432.6h-1V416.6h-1V418.0h-1V429.0h-1V395.0h-1V413.2h-1V405.1h-1V402.1h-1V401.0h-1V388.8h-1V409.4h-1V428.0h-1V432.7h-1V427.6h-1V424.7h-1V428.3h-1V430.2h-1V429.4h-1V394.9h-1V425.6h-1V420.5h-1V419.7h-1V415.7h-1V433.2h-1V433.9h-1V433.4h-1V337.6h-1V337.0h-1V333.1h-1V335.9h-1V336.0h-1V332.4h-1V333.1h-1V328.5h-1V331.1h-1V329.9h-1V325.6h-1V325.3h-1V326.3h-1V324.9h-1V323.8h-1V328.9h-1V329.9h-1V331.1h-1V332.5h-1V338.7h-1V336.0h-1V339.8h-1V347.4h-1V346.7h-1V351.0h-1V355.1h-1V352.4h-1V353.7h-1V365.2h-1V394.9h-1V428.8h-1V431.8h-1V431.5h-1V433.2h-1V431.4h-1V431.8h-1V431.1h-1V411.6h-1V431.2h-1V429.4h-1V402.5h-1V431.5h-1V428.8h-1V424.1h-1V419.1h-1V427.7h-1V412.6h-1V402.9h-1V419.6h-1V432.5h-1V417.9h-1V406.2h-1V431.5h-1V388.0h-1V427.3h-1V432.7h-1V432.8h-1V424.4h-1V431.8h-1V429.5h-1V428.7h-1V433.9h-1V429.2h-1V432.5h-1V432.7h-1V429.2h-1V417.7h-1V416.7h-1V407.7h-1V390.6h-1V427.6h-1V432.9h-1V429.2h-1V421.2h-1V420.5h-1V418.8h-1V431.3h-1V397.0h-1V431.8h-1V432.4h-1V431.4h-1V408.2h-1V431.8h-1V434.0h-1V429.4h-1V432.4h-1V432.7h-1V431.4h-1V411.6h-1V432.1h-1V429.7h-1V412.2h-1V390.5h-1V425.1h-1V432.9h-1V411.5h-1V408.7h-1V403.9h-1V409.7h-1V433.1h-1V403.3h-1V394.5h-1V428.5h-1V427.1h-1V424.1h-1V403.3h-1V397.2h-1V433.2h-1V427.2h-1V429.6h-1V426.6h-1V425.7h-1V432.9h-1V433.3h-1V430.9h-1V425.0h-1V433.0h-1V428.1h-1V427.8h-1V428.5h-1V424.5h-1V424.7h-1V431.5h-1V430.7h-1V431.4h-1V431.9h-1V389.2h-1V422.7h-1V431.8h-1V426.2h-1V423.5h-1V427.8h-1V433.4h-1V418.8h-1V430.6h-1V419.0h-1V404.1h-1V393.9h-1V424.3h-1V404.8h-1V433.6h-1V428.7h-1V397.2h-1V399.9h-1V431.2h-1V422.7h-1V417.4h-1V425.8h-1V405.6h-1V400.7h-1V430.4h-1V432.1h-1V413.3h-1V428.5h-1V424.9h-1V426.4h-1V422.0h-1V432.9h-1V433.5h-1V408.5h-1V431.1h-1V415.6h-1V419.8h-1V409.6h-1V406.9h-1V426.6h-1V413.0h-1V409.5h-1V422.1h-1V418.0h-1V412.8h-1V404.5h-1V400.4h-1V426.7h-1V429.3h-1V427.8h-1V430.1h-1V432.7h-1V400.3h-1V428.0h-1V422.8h-1V421.0h-1V418.2h-1V432.8h-1V423.8h-1V415.2h-1V424.6h-1V431.0h-1V433.3h-1V432.0h-1V430.8h-1V429.8h-1V433.8h-1V422.2h-1V388.0h-1V414.0h-1V407.2h-1V431.5h-1V426.0h-1V422.8h-1V433.4h-1V421.3h-1V432.0h-1V431.8h-1V431.0h-1V417.4h-1V432.1h-1V422.4h-1V412.3h-1V388.0h-1V404.7h-1V426.4h-1V423.4h-1V431.1h-1V431.8h-1V431.2h-1V423.5h-1V429.0h-1V403.8h-1V427.2h-1V408.2h-1V418.1h-1V426.7h-1V430.6h-1V422.1h-1V388.0h-1V427.6h-1V418.8h-1V413.0h-1V409.2h-1V413.6h-1V423.0h-1V427.9h-1V432.9h-1V431.4h-1V431.4h-1V432.5h-1V429.1h-1V431.8h-1V428.3h-1V433.0h-1V423.6h-1V427.4h-1V428.7h-1V425.1h-1V432.2h-1V433.0h-1V432.0h-1V431.7h-1V431.8h-1V431.3h-1V432.5h-1V426.1h-1V432.6h-1V418.7h-1V427.6h-1V431.7h-1V407.0h-1V428.5h-1V432.9h-1V433.6h-1V433.5h-1V407.1h-1V432.8h-1V425.5h-1V427.5h-1V429.5h-1V432.8h-1V432.5h-1V432.8h-1V407.5h-1V432.6h-1V431.5h-1V402.0h-1V389.8h-1V432.5h-1V431.6h-1V393.9h-1V433.3h-1V425.7h-1V427.5h-1V428.4h-1V431.1h-1V432.5h-1V418.9h-1V415.2h-1V405.3h-1V430.8h-1V427.0h-1V428.6h-1V427.9h-1V419.6h-1V406.2h-1V429.1h-1V422.2h-1V432.6h-1V434.0h-1V420.3h-1V425.4h-1V421.9h-1V421.7h-1V432.1h-1V430.9h-1V430.9h-1V429.8h-1V417.9h-1V432.1h-1V416.1h-1V431.7h-1V388.0h-1V424.3h-1V431.8h-1V430.7h-1V426.6h-1V421.2h-1V433.1h-1V432.2h-1V432.4h-1V432.2h-1V411.3h-1V416.3h-1V431.6h-1V432.7h-1V432.5h-1V422.7h-1V431.9h-1V426.5h-1V429.7h-1V429.7h-1V432.4h-1V420.4h-1V412.8h-1V407.6h-1V430.8h-1V420.7h-1V418.6h-1V408.3h-1V406.8h-1V433.6h-1V429.5h-1V433.6h-1V433.7h-1V432.7h-1V424.1h-1V427.7h-1V413.6h-1V424.3h-1V425.5h-1V426.7h-1V433.7h-1V429.2h-1V432.5h-1V430.1h-1V429.8h-1V429.0h-1V426.0h-1V428.9h-1V427.1h-1V433.7h-1V416.9h-1V427.9h-1V423.3h-1V417.4h-1V431.6h-1V428.9h-1V427.8h-1V424.7h-1V432.9h-1V421.1h-1V411.7h-1V432.8h-1V432.6h-1V428.5h-1V432.4h-1V420.1h-1V426.3h-1V423.7h-1V420.7h-1V417.7h-1V408.1h-1V415.2h-1V411.7h-1V417.6h-1V419.9h-1V424.8h-1V418.2h-1V423.8h-1V408.5h-1V417.1h-1V432.5h-1V432.1h-1V430.4h-1V423.6h-1V422.0h-1V415.3h-1V400.1h-1V415.2h-1V414.7h-1V432.9h-1V419.6h-1V418.6h-1V419.9h-1V432.6h-1V432.6h-1V401.7h-1V433.0h-1V430.7h-1V401.7h-1V422.9h-1V430.6h-1V424.5h-1V431.7h-1V398.0h-1V368.0h-1V346.0h-1V368.0h-1V421.3h-1V427.8h-1V428.6h-1V426.2h-1V423.4h-1V421.2h-1V411.4h-1V428.3h-1V428.5h-1V422.3h-1V432.4h-1V431.2h-1V431.0h-1V408.9h-1V398.8h-1V430.1h-1V426.9h-1V419.7h-1V429.7h-1V412.9h-1V420.9h-1V422.2h-1V401.6h-1V400.9h-1V421.1h-1V427.1h-1V432.9h-1V401.0h-1V413.0h-1V427.4h-1V432.5h-1V428.8h-1V433.5h-1V401.1h-1V409.1h-1V408.5h-1V426.4h-1V423.9h-1V428.5h-1V433.4h-1V403.1h-1V424.0h-1V432.3h-1V404.2h-1V424.5h-1V420.6h-1V419.9h-1V416.3h-1V405.9h-1V431.4h-1V407.8h-1V429.6h-1V423.4h-1V422.1h-1V431.6h-1V418.6h-1V427.6h-1V429.1h-1V425.3h-1V431.3h-1V429.5h-1V429.2h-1V427.0h-1V426.3h-1V431.7h-1V431.8h-1V431.7h-1V414.9h-1V419.7h-1V433.9h-1V429.6h-1V417.7h-1V430.8h-1V416.6h-1V423.7h-1V433.6h-1V425.1h-1V428.6h-1V427.3h-1V426.6h-1V431.6h-1V433.1h-1V431.6h-1V416.5h-1V420.5h-1V388.0h-1V418.8h-1V432.3h-1V431.6h-1V433.0h-1V432.2h-1V429.9h-1V429.5h-1V417.0h-1V406.8h-1V420.6h-1V411.8h-1V423.3h-1V414.7h-1V431.2h-1V388.0h-1V424.2h-1V426.3h-1V412.3h-1V420.5h-1V433.3h-1V416.3h-1V423.5h-1V409.1h-1V388.0h-1V401.3h-1V424.3h-1V412.5h-1V409.6h-1V393.5h-1V432.4h-1V418.9h-1V413.0h-1V396.9h-1V431.0h-1V421.7h-1V416.6h-1V432.7h-1V432.5h-1V433.4h-1V419.6h-1V398.0h-1V395.0h-1V421.4h-1V425.7h-1V431.4h-1V431.0h-1V433.5h-1V425.8h-1V411.9h-1V423.9h-1V423.1h-1V428.2h-1V431.4h-1V430.0h-1V422.5h-1V426.9h-1V424.4h-1V417.6h-1V431.1h-1V429.5h-1V400.5h-1V433.2h-1V429.7h-1V409.0h-1V431.2h-1V433.1h-1V432.8h-1V403.7h-1V428.2h-1V421.1h-1V429.7h-1V433.6h-1V433.0h-1V430.7h-1V432.1h-1V431.5h-1V433.0h-1V429.6h-1V432.5h-1V431.7h-1V432.7h-1V432.6h-1V399.4h-1V431.3h-1V432.0h-1V396.6h-1V431.6h-1V424.6h-1V411.4h-1V407.8h-1V395.0h-1V389.8h-1V406.5h-1V420.5h-1V426.8h-1V402.8h-1V408.4h-1V429.0h-1V426.6h-1V422.0h-1V428.5h-1V397.8h-1V430.7h-1V433.5h-1V431.5h-1V431.2h-1V421.6h-1V413.6h-1V428.5h-1V430.6h-1V424.1h-1V430.4h-1V400.3h-1V416.6h-1V429.5h-1V433.0h-1V433.7h-1V407.9h-1V432.2h-1V433.8h-1V431.8h-1V433.7h-1V422.8h-1V431.3h-1V427.4h-1V423.6h-1V421.8h-1V428.0h-1V423.0h-1V431.0h-1V420.1h-1V411.8h-1V433.1h-1V428.1h-1V424.6h-1V432.3h-1V393.7h-1V423.7h-1V432.2h-1V432.9h-1Z" fill="#46db98"/><path d="M353,555.5V461.8h1V466.1h1V448.1h1V441.5h1V450.3h1V444.0h1V443.7h1V449.6h1V441.9h1V442.7h1V437.5h1V435.0h1V444.3h1V448.1h1V445.1h1V443.8h1V436.7h1V435.1h1V450.0h1V444.2h1V460.8h1V439.1h1V456.3h1V439.7h1V459.5h1V436.1h1V436.3h1V444.1h1V440.0h1V448.3h1V444.9h1V436.0h1V434.7h1V445.2h1V444.2h1V444.7h1V456.4h1V446.3h1V440.3h1V434.0h1V440.4h1V441.1h1V437.2h1V436.7h1V466.3h1V435.8h1V437.8h1V434.5h1V436.3h1V439.6h1V441.2h1V441.3h1V441.9h1V447.0h1V435.6h1V434.2h1V444.7h1V441.9h1V436.4h1V444.0h1V436.6h1V436.2h1V439.7h1V438.7h1V440.7h1V453.6h1V453.1h1V445.1h1V434.6h1V436.8h1V436.0h1V456.1h1V447.7h1V446.1h1V455.5h1V457.1h1V446.8h1V435.3h1V436.8h1V445.3h1V437.3h1V437.6h1V453.5h1V464.2h1V451.0h1V445.2h1V451.9h1V447.8h1V436.0h1V436.4h1V436.7h1V445.0h1V480.0h1V468.7h1V462.0h1V445.8h1V436.3h1V438.9h1V460.0h1V457.0h1V466.0h1V461.4h1V462.4h1V450.2h1V447.6h1V444.1h1V466.2h1V437.8h1V450.9h1V437.9h1V439.9h1V464.0h1V439.3h1V434.1h1V449.4h1V444.9h1V443.6h1V446.8h1V448.6h1V443.7h1V437.7h1V435.3h1V434.3h1V444.9h1V443.2h1V460.6h1V436.4h1V459.3h1V434.3h1V455.9h1V451.8h1V443.3h1V440.7h1V439.9h1V441.5h1V436.7h1V445.5h1V445.9h1V465.2h1V452.3h1V453.4h1V454.6h1V436.7h1V480.0h1V435.1h1V437.0h1V439.1h1V438.6h1V444.6h1V443.0h1V440.3h1V435.1h1V434.7h1V436.8h1V435.4h1V437.0h1V443.9h1V436.9h1V464.8h1V451.4h1V448.8h1V447.6h1V436.4h1V446.5h1V455.0h1V439.6h1V436.5h1V436.9h1V438.8h1V449.4h1V443.2h1V443.2h1V440.5h1V436.0h1V434.3h1V466.3h1V454.6h1V453.2h1V434.5h1V439.0h1V441.3h1V441.3h1V442.0h1V435.4h1V465.3h1V438.9h1V439.9h1V439.2h1V436.8h1V435.2h1V435.6h1V447.7h1V436.5h1V445.5h1V437.0h1V435.9h1V435.7h1V441.1h1V480.0h1V442.2h1V444.6h1V440.2h1V442.1h1V441.6h1V441.7h1V441.2h1V435.2h1V455.2h1V453.8h1V436.8h1V442.4h1V444.3h1V439.2h1V447.7h1V444.5h1V437.8h1V434.5h1V438.3h1V438.1h1V473.8h1V461.4h1V446.0h1V442.0h1V439.4h1V440.2h1V463.5h1V497.0h1V518.0h1V497.0h1V442.7h1V436.9h1V456.3h1V449.1h1V434.9h1V436.1h1V437.6h1V454.4h1V461.1h1V450.1h1V443.3h1V436.5h1V444.4h1V441.7h1V447.7h1V443.4h1V440.3h1V472.3h1V446.0h1V441.3h1V436.1h1V447.5h1V453.3h1V446.9h1V438.5h1V444.2h1V458.1h1V434.4h1V436.6h1V436.1h1V465.4h1V450.6h1V446.6h1V441.4h1V447.9h1V449.3h1V477.5h1V462.9h1V434.4h1V443.0h1V459.7h1V439.7h1V441.7h1V442.5h1V442.3h1V440.4h1V434.3h1V444.3h1V444.6h1V461.1h1V449.7h1V437.0h1V438.6h1V453.4h1V454.7h1V434.7h1V436.5h1V442.2h1V435.1h1V449.6h1V434.0h1V434.3h1V462.9h1V452.3h1V454.5h1V435.8h1V436.8h1V461.2h1V436.6h1V443.3h1V451.9h1V437.2h1V437.5h1V437.5h1V454.3h1V435.0h1V480.0h1V438.0h1V446.5h1V442.6h1V456.9h1V436.6h1V443.5h1V473.1h1V438.4h1V437.2h1V435.4h1V453.4h1V447.1h1V441.0h1V443.0h1V442.0h1V437.3h1V440.3h1V437.6h1V436.7h1V437.2h1V473.7h1V454.3h1V442.3h1V434.2h1V435.3h1V434.9h1V434.8h1V464.8h1V455.1h1V443.0h1V465.8h1V444.7h1V441.1h1V436.3h1V454.0h1V449.9h1V436.6h1V439.7h1V440.4h1V441.1h1V446.7h1V438.0h1V472.1h1V457.6h1V456.3h1V436.1h1V449.5h1V448.4h1V438.3h1V444.5h1V443.5h1V456.6h1V447.6h1V446.8h1V456.2h1V442.6h1V441.3h1V435.3h1V435.8h1V447.5h1V450.5h1V441.3h1V452.7h1V440.8h1V444.2h1V448.6h1V435.7h1V435.6h1V450.5h1V438.7h1V436.9h1V463.1h1V445.7h1V442.7h1V447.1h1V436.4h1V435.9h1V440.4h1V439.0h1V439.8h1V460.8h1V436.8h1V437.1h1V443.7h1V439.1h1V455.1h1V441.0h1V448.0h1V445.8h1V443.4h1V436.2h1V437.3h1V439.6h1V480.0h1V477.4h1V440.8h1V434.9h1V438.0h1V434.5h1V435.4h1V441.2h1V435.3h1V444.0h1V441.7h1V445.0h1V441.8h1V467.0h1V434.6h1V434.2h1V437.2h1V446.8h1V448.3h1V435.2h1V434.8h1V441.9h1V440.9h1V444.8h1V440.5h1V438.3h1V447.1h1V444.4h1V442.5h1V442.1h1V439.3h1V441.3h1V434.2h1V436.9h1V439.3h1V435.4h1V446.9h1V444.6h1V449.4h1V480.0h1V434.9h1V450.7h1V435.8h1V462.0h1V435.3h1V458.4h1V435.3h1V449.0h1V447.3h1V456.7h1V458.4h1V461.9h1V434.8h1V472.8h1V435.0h1V453.1h1V447.2h1V455.4h1V452.8h1V454.9h1V448.3h1V436.8h1V438.1h1V439.8h1V435.0h1V439.0h1V437.2h1V434.5h1V443.6h1V454.7h1V454.0h1V436.0h1V437.4h1V439.0h1V446.4h1V454.0h1V436.9h1V448.4h1V447.2h1V443.8h1V449.7h1V436.9h1V439.7h1V435.6h1V439.2h1V441.7h1V437.4h1V453.9h1V436.5h1V436.2h1V435.8h1V435.1h1V434.3h1V436.4h1V443.2h1V442.2h1V439.6h1V438.8h1V437.0h1V451.5h1V435.3h1V443.0h1V446.6h1V436.2h1V461.1h1V458.1h1V434.9h1V458.3h1V480.0h1V436.0h1V434.4h1V438.0h1V457.1h1V446.7h1V480.0h1V459.1h1V455.2h1V435.7h1V437.7h1V435.8h1V435.8h1V449.8h1V449.6h1V444.5h1V443.6h1V438.1h1V449.0h1V445.5h1V448.2h1V441.7h1V463.5h1V449.1h1V445.0h1V442.1h1V440.7h1V438.9h1V456.8h1V446.6h1V464.9h1V448.7h1V446.1h1V441.9h1V447.3h1V435.0h1V442.8h1V436.0h1V472.6h1V436.8h1V438.5h1V435.8h1V437.7h1V470.9h1V434.1h1V480.0h1V474.3h1V439.4h1V437.8h1V443.1h1V463.5h1V436.0h1V453.1h1V451.6h1V438.2h1V473.8h1V436.0h1V444.3h1V450.2h1V436.1h1V437.4h1V461.4h1V444.3h1V439.5h1V435.2h1V436.7h1V451.2h1V435.5h1V436.3h1V438.5h1V444.0h1V436.2h1V437.4h1V448.3h1V436.1h1V452.8h1V444.8h1V441.7h1V438.7h1V442.2h1V439.7h1V434.4h1V434.4h1V449.6h1V445.0h1V445.9h1V444.1h1V436.9h1V434.2h1V457.8h1V438.4h1V476.2h1V471.8h1V462.2h1V437.2h1V459.7h1V443.3h1V436.9h1V435.1h1V441.6h1V478.8h1V469.9h1V455.2h1V437.5h1V452.0h1V444.9h1V491.4h1V496.1h1V502.5h1V502.7h1V506.3h1V511.7h1V511.5h1V521.0h1V525.3h1V522.6h1V527.5h1V533.6h1V533.2h1V535.5h1V540.4h1V541.5h1V538.5h1V536.8h1V537.9h1V536.5h1V535.2h1V531.4h1V531.1h1V532.3h1V527.9h1V527.5h1V526.1h1V524.7h1V521.4h1V440.9h1V465.4h1V435.7h1V444.5h1V435.7h1V456.4h1V447.6h1V480.0h1V435.5h1V435.0h1V436.2h1V437.5h1V434.1h1V452.9h1V449.9h1V456.6h1V441.3h1V476.3h1V473.2h1V436.9h1V440.5h1V437.1h1V480.0h1V467.2h1V451.1h1V434.5h1V435.0h1V435.8h1V437.5h1V436.9h1V442.8h1V444.9h1V441.4h1V465.7h1V462.5h1V459.0h1V435.9h1V435.3h1V476.3h1V436.9h1V455.0h1V452.2h1V434.7h1V464.0h1V450.5h1V442.7h1V464.6h1V437.6h1V453.7h1V436.3h1V443.8h1V440.9h1V434.9h1V480.0h1V442.2h1V436.9h1V457.4h1V455.0h1V436.3h1V468.9h1V463.7h1V458.4h1V437.5h1V435.0h1V434.9h1V435.8h1V459.7h1V436.2h1V437.2h1V443.0h1V436.2h1V446.2h1V448.1h1V436.4h1V434.9h1V435.1h1V444.2h1V439.6h1V445.5h1V434.0h1V434.1h1V434.0h1V434.0h1V434.0h1V434.0h1V434.0h1V458.7h1V494.1h1V516.5h1V530.7h1V539.8h1V545.5h1V549.2h1V551.5h1V552.9h1V553.9h1V554.5h1V554.8h1V554.9h1V554.9h1V554.9h1V554.9h1V554.9h1V555.5V556.1h-1V556.1h-1V556.1h-1V556.1h-1V556.1h-1V556.1h-1V556.5h-1V557.0h-1V557.9h-1V559.3h-1V561.5h-1V565.0h-1V570.4h-1V579.0h-1V592.5h-1V613.9h-1V647.5h-1V677.0h-1V677.0h-1V677.0h-1V677.0h-1V677.0h-1V676.0h-1V675.8h-1V675.9h-1V676.1h-1V671.2h-1V667.8h-1V670.8h-1V667.9h-1V653.4h-1V675.9h-1V674.9h-1V671.5h-1V670.0h-1V666.3h-1V664.0h-1V671.1h-1V655.0h-1V675.6h-1V676.2h-1V674.2h-1V667.3h-1V675.5h-1V653.7h-1V634.6h-1V671.6h-1V675.0h-1V674.3h-1V673.4h-1V661.4h-1V675.2h-1V675.7h-1V675.7h-1V670.1h-1V665.8h-1V658.0h-1V670.4h-1V658.5h-1V674.1h-1V673.9h-1V674.7h-1V674.6h-1V677.0h-1V667.9h-1V668.4h-1V676.1h-1V669.3h-1V675.4h-1V676.0h-1V675.4h-1V672.2h-1V672.7h-1V669.8h-1V665.3h-1V661.5h-1V658.5h-1V666.9h-1V675.2h-1V674.2h-1V669.9h-1V674.2h-1V673.8h-1V673.7h-1V674.6h-1V674.2h-1V672.5h-1V662.8h-1V664.8h-1V674.7h-1V666.3h-1V674.4h-1V671.8h-1V667.3h-1V674.6h-1V663.1h-1V668.5h-1V675.3h-1V658.8h-1V662.2h-1V673.2h-1V673.9h-1V653.0h-1V583.2h-1V579.0h-1V577.0h-1V575.7h-1V578.7h-1V578.2h-1V576.6h-1V572.4h-1V570.9h-1V570.0h-1V570.6h-1V569.1h-1V567.2h-1V566.1h-1V569.2h-1V569.1h-1V571.1h-1V573.3h-1V577.5h-1V576.9h-1V579.6h-1V584.8h-1V589.0h-1V589.9h-1V592.9h-1V594.9h-1V604.2h-1V596.8h-1V608.5h-1V664.9h-1V661.6h-1V647.9h-1V673.2h-1V672.2h-1V638.0h-1V673.7h-1V667.8h-1V675.3h-1V676.4h-1V667.1h-1V661.4h-1V660.6h-1V670.6h-1V665.1h-1V656.2h-1V644.7h-1V672.9h-1V649.3h-1V668.3h-1V661.6h-1V674.5h-1V655.1h-1V650.2h-1V669.6h-1V650.9h-1V663.7h-1V659.9h-1V659.6h-1V665.4h-1V670.0h-1V660.3h-1V667.5h-1V672.8h-1V669.2h-1V659.8h-1V665.9h-1V661.1h-1V655.4h-1V672.0h-1V658.2h-1V658.3h-1V668.8h-1V668.5h-1V674.8h-1V673.0h-1V675.3h-1V667.0h-1V662.2h-1V651.1h-1V676.3h-1V676.9h-1V676.2h-1V667.0h-1V674.3h-1V668.9h-1V665.5h-1V669.5h-1V668.8h-1V671.6h-1V672.9h-1V673.7h-1V675.6h-1V662.4h-1V672.3h-1V676.1h-1V644.7h-1V670.8h-1V668.4h-1V668.2h-1V665.8h-1V657.0h-1V675.1h-1V674.3h-1V664.5h-1V676.9h-1V674.0h-1V672.6h-1V675.6h-1V675.4h-1V655.7h-1V674.5h-1V673.4h-1V669.1h-1V676.4h-1V676.8h-1V655.0h-1V674.4h-1V631.0h-1V656.6h-1V675.8h-1V652.8h-1V661.7h-1V664.6h-1V653.6h-1V669.5h-1V675.9h-1V676.4h-1V671.3h-1V675.7h-1V673.8h-1V675.8h-1V667.5h-1V672.8h-1V673.7h-1V673.1h-1V668.5h-1V665.7h-1V671.3h-1V670.2h-1V661.6h-1V660.6h-1V660.9h-1V659.1h-1V672.1h-1V673.9h-1V676.3h-1V673.1h-1V663.9h-1V664.9h-1V674.1h-1V672.5h-1V668.1h-1V661.6h-1V673.3h-1V670.2h-1V652.5h-1V645.8h-1V631.0h-1V672.7h-1V672.7h-1V674.9h-1V674.9h-1V675.4h-1V662.4h-1V655.9h-1V660.0h-1V652.6h-1V672.0h-1V676.2h-1V674.4h-1V668.9h-1V674.8h-1V667.7h-1V664.3h-1V674.5h-1V667.8h-1V674.2h-1V671.8h-1V674.6h-1V676.1h-1V670.9h-1V675.2h-1V675.7h-1V634.2h-1V636.7h-1V665.2h-1V640.7h-1V676.3h-1V670.5h-1V670.7h-1V674.8h-1V663.4h-1V663.7h-1V657.7h-1V643.8h-1V674.4h-1V674.3h-1V673.1h-1V657.5h-1V657.3h-1V673.8h-1V674.2h-1V631.0h-1V673.0h-1V671.1h-1V668.2h-1V663.9h-1V663.0h-1V674.2h-1V674.7h-1V669.8h-1V669.5h-1V676.9h-1V675.3h-1V660.8h-1V657.5h-1V667.7h-1V660.8h-1V673.2h-1V655.6h-1V673.3h-1V673.1h-1V664.1h-1V654.5h-1V675.2h-1V676.9h-1V671.7h-1V676.3h-1V675.9h-1V676.6h-1V676.3h-1V659.2h-1V651.3h-1V653.8h-1V665.4h-1V664.2h-1V674.5h-1V675.4h-1V654.8h-1V650.7h-1V672.2h-1V674.0h-1V672.8h-1V652.8h-1V675.0h-1V674.5h-1V674.4h-1V655.5h-1V650.6h-1V648.4h-1V672.7h-1V670.0h-1V664.0h-1V674.3h-1V659.4h-1V663.0h-1V662.2h-1V673.3h-1V657.5h-1V670.8h-1V672.8h-1V657.8h-1V662.6h-1V675.0h-1V668.8h-1V675.9h-1V674.4h-1V675.9h-1V674.6h-1V662.6h-1V673.9h-1V676.8h-1V675.3h-1V676.0h-1V673.9h-1V674.8h-1V675.7h-1V674.7h-1V664.3h-1V662.6h-1V650.2h-1V675.7h-1V674.1h-1V662.5h-1V673.8h-1V675.1h-1V673.9h-1V669.7h-1V673.2h-1V674.6h-1V673.7h-1V674.4h-1V659.3h-1V673.6h-1V673.0h-1V674.9h-1V677.0h-1V667.7h-1V665.1h-1V665.0h-1V654.2h-1V672.1h-1V674.7h-1V667.6h-1V669.1h-1V665.7h-1V668.0h-1V672.7h-1V673.5h-1V668.1h-1V676.3h-1V663.0h-1V652.1h-1V662.8h-1V662.1h-1V675.3h-1V672.0h-1V660.4h-1V673.6h-1V674.6h-1V664.5h-1V666.4h-1V660.0h-1V664.7h-1V666.7h-1V674.8h-1V660.5h-1V671.4h-1V671.0h-1V674.9h-1V672.1h-1V664.6h-1V657.0h-1V670.3h-1V674.6h-1V670.7h-1V662.2h-1V657.5h-1V675.7h-1V651.2h-1V675.9h-1V654.5h-1V676.8h-1V672.4h-1V673.1h-1V670.9h-1V667.8h-1V666.9h-1V665.1h-1V669.6h-1V675.1h-1V674.5h-1V666.8h-1V674.6h-1V668.3h-1V667.4h-1V662.5h-1V653.2h-1V670.5h-1V674.7h-1V674.8h-1V676.6h-1V675.2h-1V667.6h-1V674.0h-1V669.5h-1V674.7h-1V674.4h-1V675.1h-1V650.6h-1V674.5h-1V674.3h-1V674.2h-1V672.5h-1V669.6h-1V665.2h-1V675.2h-1V650.5h-1V672.5h-1V674.7h-1V676.2h-1V649.8h-1V671.5h-1V672.5h-1V674.6h-1V672.5h-1V674.3h-1V675.1h-1V675.0h-1V652.1h-1V641.7h-1V670.2h-1V669.8h-1V672.9h-1V676.0h-1V657.3h-1V662.5h-1V669.4h-1V673.6h-1V676.7h-1V674.7h-1V665.4h-1V674.4h-1V662.1h-1V661.5h-1V674.1h-1V673.9h-1V670.3h-1V668.5h-1V672.1h-1V676.1h-1V675.3h-1V674.0h-1V612.5h-1V591.0h-1V612.5h-1V671.9h-1V666.9h-1V666.9h-1V674.0h-1V674.3h-1V673.6h-1V666.5h-1V676.3h-1V674.0h-1V674.2h-1V667.9h-1V662.3h-1V670.7h-1V667.6h-1V674.4h-1V674.7h-1V674.5h-1V670.8h-1V664.5h-1V658.3h-1V664.5h-1V660.5h-1V658.5h-1V672.2h-1V675.8h-1V666.8h-1V669.0h-1V672.8h-1V671.2h-1V673.6h-1V673.9h-1V675.8h-1V675.7h-1V644.4h-1V658.3h-1V662.4h-1V675.4h-1V655.0h-1V671.3h-1V631.9h-1V671.4h-1V672.7h-1V671.9h-1V656.0h-1V653.8h-1V675.8h-1V666.3h-1V653.7h-1V660.7h-1V672.7h-1V676.1h-1V676.4h-1V674.1h-1V672.9h-1V656.6h-1V674.8h-1V675.7h-1V676.7h-1V676.5h-1V634.2h-1V675.6h-1V668.0h-1V665.3h-1V672.9h-1V657.6h-1V674.7h-1V668.6h-1V675.4h-1V668.8h-1V669.6h-1V667.1h-1V675.8h-1V664.2h-1V674.5h-1V674.5h-1V647.0h-1V664.4h-1V659.4h-1V671.4h-1V662.7h-1V674.1h-1V672.4h-1V648.8h-1V675.0h-1V671.7h-1V671.9h-1V676.0h-1V676.8h-1V674.1h-1V658.1h-1V670.6h-1V667.1h-1V657.3h-1V642.7h-1V663.8h-1V660.6h-1V660.2h-1V663.9h-1V674.7h-1V674.5h-1V674.3h-1V676.6h-1V674.1h-1V671.7h-1V673.2h-1V673.9h-1V673.3h-1V673.4h-1V674.6h-1V675.5h-1V674.6h-1V676.1h-1V669.9h-1V643.6h-1V658.3h-1V674.4h-1V676.3h-1V667.8h-1V676.2h-1V647.6h-1V674.8h-1V673.9h-1V671.5h-1V670.7h-1V669.6h-1V673.1h-1V669.8h-1V676.0h-1V676.7h-1V674.4h-1V671.9h-1V675.3h-1V674.5h-1V676.9h-1V672.8h-1V669.0h-1V676.6h-1V665.3h-1V674.2h-1V675.1h-1V666.0h-1V670.3h-1V666.0h-1V674.1h-1V675.8h-1V675.0h-1V668.5h-1V674.7h-1V664.1h-1V675.6h-1V669.1h-1V670.2h-1V676.7h-1V675.0h-1V671.0h-1V671.1h-1V674.5h-1V676.7h-1V669.3h-1V674.3h-1V673.4h-1V675.8h-1V674.2h-1V651.0h-1V672.8h-1V673.5h-1V674.8h-1V662.9h-1V664.7h-1V661.9h-1V675.1h-1V676.0h-1V672.2h-1V667.2h-1V674.7h-1V671.4h-1V675.6h-1V663.0h-1V676.7h-1V656.5h-1V676.1h-1V676.5h-1V674.7h-1V675.6h-1V674.6h-1V674.3h-1V674.7h-1V648.3h-1V676.5h-1V674.8h-1V674.3h-1V666.9h-1V653.0h-1V674.5h-1V663.2h-1V668.5h-1V674.5h-1V675.5h-1V674.2h-1V659.4h-1V671.7h-1V671.5h-1V676.0h-1V668.1h-1V666.2h-1V673.9h-1V675.4h-1V675.9h-1V676.7h-1V666.3h-1V602.0h-1V592.0h-1V588.0h-1V598.0h-1V672.5h-1V668.5h-1V663.3h-1V676.7h-1V608.8h-1V597.4h-1V586.0h-1V597.4h-1V608.8h-1V668.4h-1V667.4h-1V663.0h-1Z" fill="#46db98"/><path d="M353 434.500H1098" stroke="#7f7f7f" stroke-width="1"/><path d="M470.500 191V677" stroke="#a04a2c" stroke-width="1.100" stroke-dasharray="3 1" opacity="0.950"/><path d="M1071 194h11v11z" fill="#c9c9c9"/><path d="M1071 194v11h11z" fill="#5a6a60"/></svg>
<svg style="left:0;top:0" width="1600" height="865" viewBox="0 0 1600 865"><rect x="352.500" y="117.500" width="746" height="30" rx="3" fill="#222" stroke="#6f6f6f" stroke-width="1.300"/><clipPath id="ovc"><rect x="353" y="118.500" width="745" height="28.500" rx="2"/></clipPath><g clip-path="url(#ovc)"><path d="M353,119.2 354,119.3 355,119.3 356,118.7 357,119.5 358,119.4 359,119.1 360,119.1 361,118.7 362,118.9 363,119.3 364,119.3 365,119.2 366,118.7 367,118.9 368,119.5 369,118.9 370,119.1 371,118.9 372,119.3 373,119.4 374,119.0 375,118.8 376,118.9 377,118.7 378,119.0 379,119.4 380,119.0 381,119.3 382,119.5 383,119.3 384,118.7 385,119.0 386,118.7 387,118.8 388,118.9 389,119.4 390,119.0 391,119.1 392,118.8 393,119.3 394,118.7 395,118.8 396,119.2 397,119.0 398,119.1 399,119.0 400,118.8 401,119.3 402,118.8 403,119.5 404,119.0 405,119.2 406,119.1 407,118.7 408,118.7 409,119.4 410,119.3 411,119.2 412,118.8 413,118.8 414,118.9 415,119.5 416,119.5 417,119.1 418,119.1 419,119.0 420,119.0 421,119.5 422,119.1 423,118.8 424,119.3 425,119.0 426,119.3 427,119.2 428,119.0 429,118.9 430,119.3 431,118.9 432,119.2 433,118.7 434,118.9 435,119.1 436,119.2 437,119.0 438,119.3 439,119.0 440,119.4 441,119.5 442,119.1 443,118.8 444,119.4 445,119.3 446,119.3 447,119.3 448,119.2 449,119.2 450,119.2 451,118.7 452,119.1 453,118.9 454,119.2 455,119.1 456,118.7 457,119.0 458,118.9 459,119.1 460,119.2 461,118.9 462,118.7 463,118.9 464,118.8 465,119.0 466,119.2 467,119.1 468,119.2 469,119.4 470,119.4 471,119.0 472,119.2 473,119.5 474,119.2 475,119.4 476,118.8 477,119.2 478,119.2 479,119.0 480,118.9 481,119.5 482,119.5 483,119.2 484,119.5 485,119.0 486,119.5 487,118.9 488,118.8 489,119.1 490,119.3 491,118.7 492,118.9 493,119.3 494,118.9 495,119.5 496,119.2 497,119.2 498,119.3 499,119.3 500,119.1 501,118.9 502,119.1 503,119.3 504,118.7 505,119.1 506,119.4 507,118.7 508,119.0 509,119.3 510,119.1 511,119.0 512,119.4 513,118.9 514,118.8 515,119.3 516,118.9 517,119.4 518,119.1 519,119.1 520,118.8 521,119.3 522,118.9 523,119.3 524,118.7 525,119.5 526,119.3 527,119.4 528,119.2 529,119.3 530,118.9 531,118.8 532,119.0 533,119.2 534,118.8 535,118.8 536,119.2 537,119.4 538,119.0 539,119.2 540,119.5 541,118.7 542,118.8 543,119.1 544,119.1 545,118.9 546,118.9 547,119.1 548,118.9 549,119.3 550,119.3 551,118.8 552,118.8 553,119.2 554,119.4 555,119.0 556,118.7 557,118.7 558,119.5 559,118.9 560,119.5 561,119.4 562,119.2 563,118.9 564,119.2 565,119.0 566,119.4 567,119.3 568,119.4 569,119.2 570,119.3 571,118.8 572,118.9 573,119.4 574,119.3 575,119.1 576,119.2 577,119.1 578,118.8 579,119.0 580,119.4 581,118.9 582,118.8 583,118.9 584,118.7 585,119.0 586,119.3 587,119.1 588,118.8 589,118.9 590,119.3 591,118.9 592,118.9 593,119.0 594,119.0 595,119.1 596,119.3 597,118.8 598,119.2 599,119.2 600,119.5 601,118.7 602,119.0 603,119.1 604,119.1 605,118.8 606,119.4 607,119.4 608,118.9 609,119.0 610,118.9 611,118.9 612,118.7 613,118.8 614,119.0 615,118.8 616,118.8 617,119.4 618,119.4 619,118.7 620,119.1 621,119.0 622,119.3 623,118.9 624,119.4 625,118.8 626,118.8 627,119.4 628,118.8 629,118.9 630,119.0 631,118.9 632,119.3 633,118.9 634,119.0 635,119.0 636,119.3 637,119.4 638,119.3 639,119.1 640,119.2 641,119.3 642,118.9 643,119.0 644,118.8 645,118.9 646,118.9 647,119.3 648,118.7 649,118.8 650,119.4 651,119.2 652,119.0 653,119.0 654,119.2 655,119.3 656,119.1 657,119.3 658,119.5 659,118.8 660,119.4 661,119.0 662,119.3 663,119.1 664,119.2 665,119.4 666,118.7 667,118.7 668,119.1 669,119.0 670,118.9 671,119.1 672,119.3 673,119.0 674,119.5 675,119.4 676,119.0 677,119.4 678,118.7 679,118.8 680,119.4 681,119.3 682,119.2 683,119.2 684,119.0 685,119.1 686,118.8 687,119.0 688,118.9 689,119.1 690,119.0 691,119.4 692,119.3 693,119.1 694,119.0 695,119.2 696,118.9 697,118.8 698,119.2 699,119.3 700,119.4 701,119.3 702,119.3 703,119.5 704,119.3 705,119.3 706,118.9 707,119.4 708,119.5 709,119.0 710,119.0 711,119.2 712,119.4 713,119.0 714,119.3 715,119.3 716,119.4 717,118.9 718,119.2 719,118.8 720,119.3 721,118.8 722,119.4 723,119.3 724,119.0 725,119.4 726,118.9 727,119.5 728,118.7 729,119.2 730,118.8 731,119.2 732,119.3 733,118.7 734,119.4 735,119.0 736,119.2 737,118.9 738,119.4 739,118.8 740,118.8 741,118.8 742,118.8 743,119.3 744,119.3 745,119.4 746,119.2 747,118.8 748,118.8 749,119.0 750,119.2 751,118.8 752,119.1 753,118.8 754,119.0 755,119.1 756,119.5 757,119.3 758,118.9 759,119.1 760,119.3 761,119.0 762,119.1 763,119.3 764,118.9 765,119.4 766,118.7 767,118.9 768,118.8 769,118.8 770,119.5 771,119.0 772,118.8 773,119.3 774,119.3 775,118.7 776,119.1 777,119.1 778,118.9 779,119.1 780,118.8 781,119.5 782,119.1 783,119.0 784,119.0 785,119.4 786,119.2 787,118.7 788,119.0 789,119.4 790,119.0 791,119.3 792,118.8 793,119.0 794,119.5 795,119.0 796,119.1 797,119.2 798,118.8 799,118.8 800,119.4 801,118.9 802,119.4 803,119.2 804,118.9 805,119.5 806,118.8 807,118.9 808,119.0 809,118.8 810,119.5 811,118.8 812,119.2 813,119.0 814,119.2 815,118.9 816,118.9 817,119.3 818,119.1 819,118.7 820,119.0 821,119.2 822,118.7 823,118.7 824,119.0 825,118.9 826,119.2 827,119.0 828,119.3 829,119.5 830,118.9 831,119.4 832,119.1 833,119.1 834,119.4 835,119.1 836,118.8 837,119.1 838,118.9 839,118.7 840,119.0 841,119.5 842,118.9 843,119.3 844,119.4 845,119.0 846,118.9 847,119.4 848,119.4 849,118.8 850,119.3 851,118.7 852,119.4 853,119.4 854,119.2 855,119.3 856,119.2 857,119.5 858,118.8 859,118.8 860,119.1 861,119.4 862,118.8 863,119.4 864,119.3 865,118.9 866,119.3 867,119.4 868,118.8 869,118.9 870,118.9 871,119.0 872,119.0 873,119.2 874,118.8 875,119.2 876,119.2 877,118.8 878,119.1 879,119.4 880,119.2 881,119.3 882,118.9 883,118.9 884,119.4 885,119.2 886,119.5 887,119.3 888,118.8 889,119.4 890,118.7 891,119.0 892,119.3 893,119.0 894,118.8 895,119.3 896,119.4 897,118.9 898,119.5 899,119.4 900,118.8 901,118.9 902,119.2 903,118.8 904,119.4 905,119.1 906,119.3 907,119.1 908,119.5 909,119.0 910,119.1 911,119.0 912,119.1 913,119.0 914,119.4 915,119.3 916,118.8 917,119.5 918,119.1 919,119.2 920,118.9 921,118.9 922,119.3 923,118.8 924,119.3 925,118.8 926,118.8 927,118.8 928,119.2 929,118.8 930,118.8 931,118.9 932,118.7 933,118.8 934,119.0 935,119.2 936,119.4 937,118.9 938,119.4 939,119.0 940,119.5 941,119.2 942,119.3 943,119.5 944,119.4 945,119.0 946,119.2 947,119.3 948,119.3 949,119.3 950,119.1 951,119.3 952,119.4 953,119.1 954,118.8 955,119.5 956,118.9 957,119.2 958,119.2 959,118.9 960,119.2 961,119.3 962,119.0 963,119.3 964,119.2 965,119.1 966,122.4 967,122.4 968,122.4 969,122.4 970,123.3 971,123.3 972,123.3 973,123.3 974,123.3 975,123.3 976,123.3 977,123.3 978,123.3 979,123.3 980,123.3 981,123.3 982,123.3 983,123.3 984,123.3 985,123.3 986,123.3 987,123.3 988,123.3 989,123.3 990,123.3 991,123.3 992,123.3 993,122.1 994,122.1 995,118.7 996,119.4 997,118.7 998,119.3 999,119.1 1000,119.3 1001,119.1 1002,119.3 1003,119.2 1004,119.2 1005,119.4 1006,118.7 1007,119.5 1008,118.8 1009,118.8 1010,118.8 1011,118.7 1012,118.9 1013,119.0 1014,119.5 1015,119.3 1016,119.0 1017,119.0 1018,119.1 1019,119.3 1020,119.2 1021,119.4 1022,119.3 1023,119.2 1024,119.4 1025,119.1 1026,119.0 1027,119.2 1028,118.9 1029,119.4 1030,118.8 1031,119.0 1032,118.9 1033,118.8 1034,118.8 1035,119.1 1036,119.4 1037,119.4 1038,118.8 1039,118.7 1040,119.3 1041,119.3 1042,119.4 1043,119.1 1044,119.0 1045,119.4 1046,118.9 1047,118.8 1048,118.9 1049,119.2 1050,119.3 1051,119.0 1052,119.3 1053,119.2 1054,119.1 1055,119.2 1056,119.2 1057,119.1 1058,119.1 1059,118.9 1060,118.8 1061,118.9 1062,118.8 1063,119.4 1064,118.8 1065,119.5 1066,119.0 1067,119.2 1068,118.8 1069,119.0 1070,119.1 1071,118.7 1072,118.9 1073,119.4 1074,119.0 1075,119.4 1076,119.1 1077,119.2 1078,119.0 1079,119.1 1080,118.9 1081,119.2 1082,121.2 1083,122.8 1084,123.8 1085,124.4 1086,124.8 1087,125.1 1088,125.2 1089,125.3 L1089,125.7 1088,125.8 1087,125.9 1086,126.2 1085,126.6 1084,127.2 1083,128.2 1082,129.8 1081,131.8 1080,132.0 1079,131.6 1078,132.2 1077,132.0 1076,131.8 1075,131.8 1074,131.9 1073,131.9 1072,132.1 1071,132.1 1070,131.6 1069,131.8 1068,131.6 1067,131.9 1066,132.1 1065,132.2 1064,132.0 1063,132.1 1062,132.1 1061,132.1 1060,131.8 1059,131.9 1058,132.2 1057,131.9 1056,132.3 1055,131.6 1054,132.2 1053,132.2 1052,132.1 1051,131.6 1050,132.0 1049,132.2 1048,131.8 1047,131.9 1046,131.6 1045,132.1 1044,131.9 1043,132.2 1042,131.8 1041,131.9 1040,131.9 1039,131.8 1038,132.3 1037,132.2 1036,132.0 1035,131.5 1034,132.3 1033,132.0 1032,132.3 1031,132.2 1030,131.8 1029,132.0 1028,131.9 1027,131.7 1026,132.1 1025,132.1 1024,131.7 1023,131.8 1022,132.0 1021,131.6 1020,131.7 1019,131.6 1018,131.7 1017,132.3 1016,131.9 1015,132.1 1014,131.6 1013,132.2 1012,131.7 1011,132.0 1010,132.1 1009,132.0 1008,132.0 1007,132.1 1006,131.6 1005,131.8 1004,131.7 1003,131.6 1002,131.7 1001,132.3 1000,131.9 999,131.9 998,132.2 997,132.3 996,132.2 995,132.1 994,128.9 993,128.9 992,127.7 991,127.7 990,127.7 989,127.7 988,127.7 987,127.7 986,127.7 985,127.7 984,127.7 983,127.7 982,127.7 981,127.7 980,127.7 979,127.7 978,127.7 977,127.7 976,127.7 975,127.7 974,127.7 973,127.7 972,127.7 971,127.7 970,127.7 969,128.6 968,128.6 967,128.6 966,128.6 965,131.8 964,131.7 963,132.0 962,132.1 961,131.9 960,131.8 959,132.3 958,132.1 957,132.0 956,131.6 955,131.6 954,132.1 953,131.9 952,132.3 951,131.7 950,132.3 949,132.2 948,131.8 947,131.9 946,132.0 945,131.6 944,131.8 943,132.1 942,132.3 941,131.7 940,132.2 939,132.0 938,132.2 937,132.0 936,131.6 935,131.9 934,131.8 933,131.7 932,131.7 931,132.0 930,131.8 929,131.7 928,131.6 927,131.9 926,132.2 925,131.5 924,131.7 923,132.1 922,131.8 921,131.9 920,131.7 919,131.9 918,131.6 917,131.9 916,132.3 915,131.9 914,132.0 913,131.8 912,131.6 911,132.1 910,131.5 909,132.1 908,131.9 907,132.2 906,132.2 905,132.2 904,131.5 903,131.9 902,132.1 901,132.3 900,132.0 899,131.9 898,131.7 897,132.2 896,132.2 895,132.0 894,132.2 893,132.0 892,132.1 891,131.8 890,131.5 889,131.8 888,131.8 887,132.0 886,132.2 885,131.8 884,132.1 883,132.0 882,132.2 881,131.6 880,132.0 879,131.9 878,131.9 877,132.1 876,131.6 875,131.9 874,131.9 873,132.2 872,131.8 871,132.2 870,132.2 869,131.5 868,132.1 867,131.9 866,131.9 865,132.3 864,132.1 863,132.2 862,131.8 861,131.7 860,131.8 859,132.2 858,131.8 857,132.2 856,132.1 855,131.8 854,132.2 853,132.3 852,131.9 851,132.3 850,131.9 849,132.3 848,132.2 847,131.9 846,132.1 845,131.8 844,131.8 843,132.1 842,131.7 841,132.1 840,132.2 839,132.2 838,131.9 837,131.8 836,132.0 835,131.6 834,132.1 833,132.0 832,131.7 831,132.2 830,132.2 829,131.5 828,131.6 827,131.9 826,131.6 825,131.9 824,132.3 823,132.0 822,131.9 821,131.7 820,131.9 819,131.7 818,131.7 817,132.2 816,131.9 815,131.8 814,131.5 813,131.9 812,132.0 811,132.2 810,131.7 809,131.9 808,131.7 807,131.7 806,132.0 805,132.3 804,131.6 803,132.2 802,131.5 801,132.3 800,131.6 799,132.0 798,131.9 797,132.2 796,132.1 795,132.1 794,132.1 793,131.5 792,131.7 791,131.6 790,131.5 789,131.6 788,131.6 787,131.7 786,132.3 785,131.8 784,131.8 783,131.7 782,132.3 781,131.8 780,132.1 779,131.9 778,131.5 777,132.3 776,132.0 775,132.1 774,132.0 773,132.3 772,132.0 771,131.6 770,131.9 769,131.9 768,132.1 767,131.8 766,132.0 765,131.9 764,132.0 763,131.8 762,131.7 761,132.1 760,131.6 759,132.0 758,132.2 757,131.7 756,132.2 755,131.5 754,131.8 753,131.8 752,132.0 751,132.0 750,131.7 749,131.9 748,132.1 747,132.2 746,131.5 745,131.5 744,131.7 743,131.6 742,131.7 741,131.8 740,132.2 739,132.1 738,131.9 737,131.7 736,131.6 735,131.6 734,131.5 733,131.9 732,131.7 731,131.8 730,132.1 729,131.8 728,132.2 727,132.2 726,131.8 725,132.1 724,131.9 723,132.0 722,131.6 721,131.8 720,132.1 719,131.8 718,131.6 717,132.1 716,132.1 715,132.0 714,131.9 713,132.2 712,131.8 711,131.6 710,132.2 709,132.3 708,131.9 707,132.1 706,131.9 705,131.8 704,131.6 703,131.6 702,131.8 701,132.2 700,132.1 699,132.1 698,131.7 697,132.0 696,132.2 695,131.9 694,131.8 693,131.7 692,131.8 691,131.6 690,131.5 689,131.7 688,132.0 687,132.3 686,132.0 685,131.8 684,132.3 683,131.7 682,131.6 681,132.0 680,132.1 679,131.7 678,132.2 677,131.9 676,132.2 675,131.8 674,131.6 673,132.1 672,132.1 671,132.0 670,132.1 669,132.1 668,131.6 667,131.8 666,131.5 665,132.0 664,132.2 663,131.5 662,131.6 661,131.9 660,131.9 659,132.0 658,131.7 657,131.9 656,132.2 655,132.2 654,131.6 653,132.3 652,132.0 651,132.1 650,131.5 649,132.0 648,132.3 647,131.9 646,132.2 645,131.8 644,132.2 643,132.2 642,131.7 641,131.7 640,131.5 639,131.6 638,131.8 637,131.8 636,131.9 635,132.0 634,132.2 633,132.1 632,132.3 631,132.3 630,131.8 629,132.2 628,132.2 627,132.0 626,131.7 625,132.1 624,132.1 623,131.9 622,131.6 621,131.8 620,131.8 619,131.9 618,132.1 617,131.8 616,131.9 615,132.0 614,131.9 613,131.9 612,131.5 611,132.3 610,132.0 609,132.3 608,132.3 607,132.3 606,131.9 605,132.2 604,132.0 603,131.5 602,132.3 601,131.7 600,132.3 599,132.0 598,131.5 597,132.1 596,131.7 595,132.1 594,132.1 593,131.5 592,132.2 591,132.3 590,132.2 589,131.8 588,131.8 587,131.5 586,131.8 585,131.5 584,131.6 583,131.9 582,132.1 581,132.1 580,132.2 579,132.0 578,132.2 577,132.2 576,132.0 575,131.6 574,132.3 573,131.9 572,132.3 571,132.3 570,132.0 569,131.8 568,131.9 567,132.0 566,131.8 565,132.2 564,132.0 563,132.0 562,132.0 561,132.2 560,131.8 559,132.2 558,131.8 557,132.2 556,131.7 555,131.7 554,131.9 553,132.1 552,132.2 551,131.8 550,131.8 549,132.2 548,132.0 547,132.2 546,131.7 545,131.9 544,131.8 543,131.6 542,131.8 541,131.7 540,132.0 539,131.9 538,132.0 537,132.2 536,131.7 535,132.3 534,132.0 533,132.3 532,132.2 531,131.8 530,131.6 529,132.2 528,131.5 527,132.1 526,132.3 525,131.5 524,131.7 523,131.8 522,131.6 521,132.2 520,131.8 519,132.0 518,131.9 517,132.2 516,131.7 515,132.0 514,131.6 513,131.6 512,132.1 511,132.0 510,131.6 509,131.8 508,131.8 507,131.7 506,131.9 505,131.6 504,132.1 503,131.8 502,132.0 501,131.9 500,132.0 499,132.1 498,132.2 497,131.8 496,131.9 495,132.1 494,132.2 493,132.1 492,131.6 491,131.9 490,131.6 489,132.1 488,131.8 487,131.9 486,131.9 485,132.0 484,131.9 483,132.1 482,131.6 481,132.0 480,132.1 479,132.0 478,131.6 477,132.2 476,131.8 475,132.3 474,132.0 473,131.5 472,131.8 471,132.2 470,131.8 469,132.0 468,131.5 467,132.0 466,132.2 465,132.3 464,131.6 463,132.0 462,132.0 461,131.6 460,131.8 459,132.0 458,132.3 457,132.2 456,132.2 455,132.1 454,132.3 453,131.8 452,131.8 451,132.2 450,131.7 449,131.7 448,132.0 447,131.8 446,132.2 445,131.7 444,131.9 443,131.6 442,131.9 441,131.5 440,131.7 439,131.6 438,131.6 437,131.8 436,131.7 435,131.6 434,131.8 433,131.9 432,131.8 431,131.5 430,131.7 429,131.9 428,131.7 427,131.7 426,131.7 425,131.7 424,131.6 423,132.1 422,132.0 421,131.8 420,131.5 419,132.2 418,132.1 417,131.7 416,131.9 415,131.6 414,131.9 413,131.6 412,132.0 411,131.7 410,131.5 409,132.2 408,131.9 407,131.6 406,132.0 405,131.6 404,132.1 403,131.9 402,132.3 401,131.5 400,132.2 399,132.2 398,132.1 397,131.6 396,131.6 395,132.0 394,131.5 393,131.6 392,131.7 391,131.7 390,132.0 389,131.5 388,131.7 387,131.5 386,132.3 385,131.8 384,131.7 383,131.6 382,132.3 381,132.3 380,131.9 379,131.9 378,132.1 377,131.8 376,131.8 375,132.2 374,132.2 373,132.1 372,131.5 371,131.5 370,131.8 369,131.5 368,131.6 367,132.1 366,131.6 365,132.2 364,132.2 363,132.2 362,131.6 361,132.1 360,131.8 359,132.1 358,132.2 357,131.8 356,131.9 355,131.6 354,131.5 353,131.7Z" fill="#60ebb4"/><path d="M353,133.3 354,133.8 355,133.3 356,133.9 357,133.3 358,133.4 359,133.2 360,133.3 361,133.8 362,133.9 363,133.7 364,133.3 365,133.5 366,133.3 367,133.5 368,134.0 369,133.5 370,134.0 371,133.8 372,133.6 373,133.3 374,133.9 375,133.4 376,133.5 377,133.6 378,133.2 379,133.7 380,133.6 381,133.6 382,133.8 383,133.5 384,133.3 385,133.2 386,133.4 387,133.2 388,134.0 389,133.4 390,133.2 391,133.4 392,133.4 393,133.3 394,134.0 395,133.9 396,133.8 397,133.3 398,133.3 399,133.8 400,133.2 401,133.9 402,133.8 403,133.9 404,133.5 405,133.4 406,133.4 407,133.3 408,133.4 409,134.0 410,133.9 411,133.7 412,133.5 413,133.7 414,133.8 415,133.3 416,133.7 417,133.2 418,133.4 419,133.7 420,133.4 421,133.4 422,133.3 423,133.8 424,133.6 425,133.7 426,133.3 427,133.6 428,133.3 429,133.5 430,133.6 431,133.4 432,133.7 433,133.4 434,133.6 435,133.7 436,133.6 437,133.4 438,133.9 439,133.6 440,133.2 441,133.3 442,133.9 443,133.5 444,133.7 445,133.4 446,133.9 447,133.4 448,133.6 449,133.7 450,133.6 451,133.8 452,133.7 453,133.6 454,133.5 455,133.5 456,133.7 457,133.9 458,133.8 459,133.4 460,133.7 461,133.8 462,133.6 463,133.8 464,133.6 465,133.6 466,134.0 467,133.8 468,133.3 469,133.7 470,133.8 471,133.3 472,133.7 473,134.0 474,133.9 475,133.5 476,134.0 477,133.5 478,133.6 479,133.7 480,133.8 481,133.6 482,133.7 483,133.2 484,133.5 485,133.2 486,133.9 487,133.4 488,133.4 489,133.7 490,133.6 491,133.4 492,133.2 493,133.3 494,133.8 495,133.5 496,133.4 497,133.6 498,133.6 499,133.3 500,133.3 501,133.8 502,133.9 503,134.0 504,133.9 505,133.2 506,134.0 507,133.8 508,133.2 509,133.6 510,133.9 511,134.0 512,133.4 513,133.5 514,133.6 515,134.0 516,133.4 517,133.4 518,133.3 519,134.0 520,133.6 521,133.7 522,133.5 523,133.2 524,133.5 525,133.7 526,133.4 527,133.6 528,133.9 529,133.3 530,133.9 531,133.4 532,133.2 533,133.9 534,133.2 535,133.9 536,133.4 537,133.3 538,133.3 539,133.9 540,133.6 541,133.3 542,133.9 543,133.9 544,134.0 545,133.9 546,133.9 547,133.3 548,133.7 549,133.7 550,133.5 551,133.3 552,133.6 553,133.4 554,134.0 555,133.8 556,133.2 557,133.3 558,133.8 559,133.7 560,133.8 561,133.4 562,133.3 563,134.0 564,133.5 565,133.4 566,133.6 567,133.9 568,133.2 569,133.4 570,133.5 571,133.4 572,133.6 573,133.7 574,134.0 575,133.8 576,133.7 577,133.8 578,133.4 579,133.3 580,133.7 581,133.4 582,133.2 583,133.5 584,133.7 585,133.8 586,134.0 587,133.7 588,133.4 589,133.7 590,133.3 591,133.4 592,133.8 593,133.4 594,134.0 595,133.6 596,133.7 597,133.3 598,133.7 599,134.0 600,133.9 601,133.6 602,133.6 603,133.8 604,133.3 605,133.6 606,133.6 607,133.7 608,133.3 609,133.5 610,133.9 611,133.8 612,133.3 613,133.4 614,133.8 615,133.2 616,133.8 617,134.0 618,133.8 619,133.7 620,133.4 621,133.7 622,133.7 623,133.7 624,133.5 625,133.7 626,133.2 627,133.5 628,133.7 629,133.9 630,133.5 631,133.7 632,133.9 633,133.6 634,133.9 635,133.8 636,133.9 637,133.7 638,134.0 639,133.5 640,133.7 641,133.9 642,133.4 643,133.6 644,133.5 645,133.5 646,133.4 647,133.9 648,133.4 649,133.9 650,133.4 651,134.0 652,133.3 653,133.7 654,133.2 655,133.4 656,133.3 657,133.7 658,133.7 659,133.8 660,133.7 661,133.9 662,133.3 663,133.9 664,133.9 665,133.9 666,133.5 667,133.8 668,133.6 669,133.5 670,133.6 671,134.0 672,133.3 673,133.8 674,133.6 675,133.4 676,133.4 677,133.6 678,133.9 679,133.9 680,133.5 681,133.5 682,133.5 683,134.0 684,133.3 685,133.3 686,133.5 687,133.7 688,133.4 689,133.3 690,133.6 691,133.6 692,133.8 693,133.9 694,133.9 695,133.9 696,133.9 697,133.6 698,133.8 699,133.9 700,133.5 701,133.4 702,133.5 703,133.2 704,133.9 705,133.8 706,133.7 707,133.8 708,133.6 709,133.6 710,133.4 711,133.6 712,134.0 713,134.0 714,133.3 715,133.9 716,133.4 717,133.4 718,133.3 719,133.4 720,133.7 721,133.9 722,133.9 723,133.8 724,133.5 725,133.5 726,133.5 727,133.7 728,133.4 729,133.8 730,133.4 731,133.6 732,133.9 733,133.4 734,133.6 735,133.5 736,133.7 737,133.9 738,133.5 739,133.6 740,133.6 741,133.4 742,133.9 743,133.5 744,133.7 745,133.4 746,133.5 747,133.9 748,133.6 749,133.7 750,133.4 751,133.3 752,133.4 753,133.6 754,133.3 755,133.2 756,133.8 757,133.4 758,134.0 759,133.8 760,134.0 761,133.9 762,133.3 763,133.8 764,133.3 765,133.9 766,133.3 767,134.0 768,133.8 769,133.7 770,133.6 771,133.3 772,133.8 773,133.3 774,133.7 775,133.6 776,133.8 777,133.8 778,133.6 779,133.6 780,133.6 781,133.8 782,133.7 783,133.5 784,134.0 785,133.7 786,133.6 787,133.9 788,133.9 789,133.8 790,133.3 791,133.7 792,133.9 793,133.7 794,133.5 795,133.6 796,133.6 797,133.8 798,133.7 799,133.5 800,133.5 801,133.5 802,133.4 803,133.5 804,133.9 805,133.5 806,133.9 807,133.4 808,133.6 809,133.4 810,133.3 811,133.7 812,133.9 813,133.7 814,133.8 815,133.9 816,133.8 817,133.8 818,133.5 819,133.5 820,133.2 821,133.4 822,133.9 823,133.3 824,133.5 825,133.6 826,133.6 827,133.5 828,134.0 829,133.3 830,133.8 831,133.8 832,133.3 833,133.4 834,133.8 835,133.4 836,133.8 837,133.6 838,133.3 839,133.9 840,133.4 841,133.6 842,133.9 843,133.9 844,133.6 845,133.3 846,133.9 847,133.8 848,133.8 849,133.8 850,133.4 851,133.9 852,133.2 853,134.0 854,133.6 855,133.7 856,133.6 857,133.9 858,133.8 859,133.4 860,133.4 861,134.0 862,133.9 863,133.5 864,133.3 865,133.8 866,133.7 867,133.7 868,133.8 869,133.7 870,133.4 871,133.3 872,134.0 873,133.6 874,133.9 875,133.5 876,134.0 877,133.3 878,133.7 879,133.8 880,133.8 881,133.7 882,133.9 883,133.8 884,133.8 885,133.6 886,133.6 887,133.3 888,133.4 889,133.5 890,133.2 891,133.2 892,133.5 893,133.5 894,133.2 895,133.2 896,133.8 897,133.3 898,134.0 899,133.3 900,133.9 901,133.7 902,133.7 903,133.6 904,133.6 905,134.0 906,133.6 907,133.6 908,133.7 909,133.4 910,133.6 911,133.5 912,133.6 913,133.6 914,133.6 915,133.7 916,133.7 917,133.8 918,133.7 919,133.6 920,133.2 921,133.6 922,133.8 923,133.8 924,133.4 925,133.3 926,133.4 927,133.3 928,133.4 929,133.7 930,133.2 931,133.6 932,133.6 933,133.9 934,133.5 935,133.6 936,133.7 937,133.8 938,133.8 939,133.5 940,133.7 941,133.9 942,133.6 943,133.9 944,133.8 945,133.6 946,133.6 947,133.8 948,133.2 949,133.6 950,133.6 951,133.4 952,133.7 953,133.4 954,133.7 955,133.5 956,133.5 957,134.0 958,133.9 959,133.5 960,133.9 961,133.5 962,133.8 963,133.4 964,133.7 965,133.9 966,136.9 967,136.9 968,136.9 969,136.9 970,137.8 971,137.8 972,137.8 973,137.8 974,137.8 975,137.8 976,137.8 977,137.8 978,137.8 979,137.8 980,137.8 981,137.8 982,137.8 983,137.8 984,137.8 985,137.8 986,137.8 987,137.8 988,137.8 989,137.8 990,137.8 991,137.8 992,137.8 993,136.6 994,136.6 995,133.6 996,133.3 997,134.0 998,133.3 999,133.2 1000,133.5 1001,133.9 1002,133.4 1003,133.4 1004,133.4 1005,133.6 1006,134.0 1007,133.3 1008,133.4 1009,133.4 1010,133.9 1011,133.3 1012,133.8 1013,133.4 1014,133.2 1015,133.9 1016,133.6 1017,133.8 1018,133.5 1019,133.4 1020,133.7 1021,133.2 1022,133.9 1023,133.5 1024,133.4 1025,133.9 1026,134.0 1027,133.3 1028,133.5 1029,133.3 1030,133.9 1031,133.3 1032,133.3 1033,133.4 1034,133.2 1035,133.8 1036,133.6 1037,133.8 1038,133.9 1039,133.3 1040,133.3 1041,133.4 1042,133.4 1043,133.6 1044,133.6 1045,133.3 1046,133.6 1047,133.5 1048,133.4 1049,133.4 1050,133.4 1051,133.3 1052,133.6 1053,133.3 1054,133.4 1055,133.5 1056,133.8 1057,133.6 1058,133.6 1059,133.7 1060,133.9 1061,133.7 1062,133.4 1063,133.3 1064,133.6 1065,134.0 1066,133.4 1067,133.7 1068,133.9 1069,133.4 1070,133.4 1071,133.6 1072,133.3 1073,133.7 1074,133.8 1075,133.7 1076,133.5 1077,133.9 1078,133.7 1079,133.2 1080,133.8 1081,133.5 1082,135.7 1083,137.3 1084,138.3 1085,138.9 1086,139.3 1087,139.6 1088,139.7 1089,139.8 L1089,140.2 1088,140.3 1087,140.4 1086,140.7 1085,141.1 1084,141.7 1083,142.7 1082,144.3 1081,146.1 1080,146.1 1079,146.3 1078,146.3 1077,146.6 1076,146.5 1075,146.2 1074,146.1 1073,146.1 1072,146.7 1071,146.6 1070,146.2 1069,146.3 1068,146.5 1067,146.3 1066,146.1 1065,146.3 1064,146.7 1063,146.1 1062,146.4 1061,146.2 1060,146.1 1059,146.1 1058,146.8 1057,146.5 1056,146.1 1055,146.1 1054,146.6 1053,146.1 1052,146.6 1051,146.6 1050,146.6 1049,146.2 1048,146.4 1047,146.3 1046,146.2 1045,146.4 1044,146.5 1043,146.6 1042,146.2 1041,146.1 1040,146.2 1039,146.2 1038,146.4 1037,146.1 1036,146.7 1035,146.7 1034,146.4 1033,146.6 1032,146.6 1031,146.0 1030,146.7 1029,146.1 1028,146.8 1027,146.5 1026,146.5 1025,146.3 1024,146.3 1023,146.7 1022,146.4 1021,146.5 1020,146.2 1019,146.7 1018,146.2 1017,146.5 1016,146.7 1015,146.5 1014,146.5 1013,146.5 1012,146.3 1011,146.5 1010,146.3 1009,146.1 1008,146.4 1007,146.1 1006,146.7 1005,146.4 1004,146.5 1003,146.8 1002,146.6 1001,146.8 1000,146.1 999,146.2 998,146.7 997,146.5 996,146.3 995,146.1 994,143.4 993,143.4 992,142.2 991,142.2 990,142.2 989,142.2 988,142.2 987,142.2 986,142.2 985,142.2 984,142.2 983,142.2 982,142.2 981,142.2 980,142.2 979,142.2 978,142.2 977,142.2 976,142.2 975,142.2 974,142.2 973,142.2 972,142.2 971,142.2 970,142.2 969,143.1 968,143.1 967,143.1 966,143.1 965,146.3 964,146.3 963,146.6 962,146.6 961,146.6 960,146.2 959,146.4 958,146.1 957,146.3 956,146.3 955,146.7 954,146.2 953,146.5 952,146.1 951,146.2 950,146.5 949,146.7 948,146.8 947,146.1 946,146.6 945,146.3 944,146.1 943,146.4 942,146.6 941,146.4 940,146.6 939,146.2 938,146.2 937,146.1 936,146.4 935,146.8 934,146.8 933,146.1 932,146.2 931,146.4 930,146.3 929,146.2 928,146.6 927,146.1 926,146.5 925,146.2 924,146.7 923,146.0 922,146.1 921,146.2 920,146.7 919,146.4 918,146.6 917,146.5 916,146.5 915,146.6 914,146.5 913,146.2 912,146.5 911,146.0 910,146.8 909,146.5 908,146.6 907,146.6 906,146.2 905,146.2 904,146.3 903,146.5 902,146.6 901,146.0 900,146.5 899,146.6 898,146.5 897,146.5 896,146.1 895,146.6 894,146.4 893,146.4 892,146.7 891,146.1 890,146.0 889,146.7 888,146.7 887,146.5 886,146.6 885,146.5 884,146.7 883,146.6 882,146.0 881,146.8 880,146.4 879,146.6 878,146.5 877,146.1 876,146.0 875,146.5 874,146.3 873,146.2 872,146.3 871,146.7 870,146.5 869,146.8 868,146.3 867,146.2 866,146.7 865,146.5 864,146.3 863,146.8 862,146.1 861,146.6 860,146.6 859,146.4 858,146.2 857,146.2 856,146.1 855,146.3 854,146.4 853,146.3 852,146.3 851,146.4 850,146.5 849,146.4 848,146.3 847,146.0 846,146.3 845,146.6 844,146.0 843,146.4 842,146.3 841,146.7 840,146.6 839,146.0 838,146.0 837,146.0 836,146.6 835,146.5 834,146.1 833,146.7 832,146.1 831,146.2 830,146.4 829,146.6 828,146.2 827,146.8 826,146.5 825,146.3 824,146.2 823,146.8 822,146.7 821,146.4 820,146.6 819,146.0 818,146.7 817,146.2 816,146.2 815,146.5 814,146.5 813,146.6 812,146.0 811,146.6 810,146.7 809,146.5 808,146.7 807,146.6 806,146.1 805,146.6 804,146.0 803,146.7 802,146.7 801,146.1 800,146.2 799,146.3 798,146.3 797,146.6 796,146.0 795,146.6 794,146.4 793,146.0 792,146.4 791,146.6 790,146.2 789,146.5 788,146.6 787,146.3 786,146.4 785,146.5 784,146.7 783,146.1 782,146.1 781,146.7 780,146.0 779,146.5 778,146.5 777,146.5 776,146.2 775,146.6 774,146.5 773,146.7 772,146.1 771,146.0 770,146.7 769,146.1 768,146.4 767,146.2 766,146.2 765,146.3 764,146.0 763,146.7 762,146.4 761,146.3 760,146.3 759,146.5 758,146.6 757,146.2 756,146.5 755,146.7 754,146.0 753,146.6 752,146.4 751,146.3 750,146.1 749,146.6 748,146.4 747,146.5 746,146.3 745,146.4 744,146.4 743,146.6 742,146.3 741,146.4 740,146.4 739,146.7 738,146.4 737,146.3 736,146.1 735,146.7 734,146.7 733,146.5 732,146.3 731,146.5 730,146.5 729,146.6 728,146.3 727,146.7 726,146.2 725,146.1 724,146.5 723,146.6 722,146.2 721,146.3 720,146.7 719,146.7 718,146.2 717,146.7 716,146.7 715,146.4 714,146.5 713,146.8 712,146.0 711,146.0 710,146.3 709,146.3 708,146.0 707,146.4 706,146.0 705,146.3 704,146.0 703,146.4 702,146.3 701,146.5 700,146.8 699,146.2 698,146.5 697,146.6 696,146.4 695,146.4 694,146.6 693,146.0 692,146.6 691,146.6 690,146.7 689,146.7 688,146.6 687,146.4 686,146.7 685,146.6 684,146.5 683,146.2 682,146.1 681,146.0 680,146.7 679,146.6 678,146.7 677,146.5 676,146.6 675,146.3 674,146.3 673,146.5 672,146.6 671,146.0 670,146.6 669,146.1 668,146.6 667,146.2 666,146.7 665,146.2 664,146.3 663,146.8 662,146.1 661,146.7 660,146.3 659,146.3 658,146.4 657,146.5 656,146.4 655,146.4 654,146.5 653,146.8 652,146.6 651,146.3 650,146.3 649,146.3 648,146.2 647,146.3 646,146.1 645,146.0 644,146.6 643,146.2 642,146.0 641,146.7 640,146.7 639,146.7 638,146.5 637,146.3 636,146.5 635,146.4 634,146.6 633,146.1 632,146.8 631,146.5 630,146.2 629,146.5 628,146.4 627,146.3 626,146.7 625,146.5 624,146.6 623,146.3 622,146.4 621,146.1 620,146.4 619,146.6 618,146.5 617,146.6 616,146.3 615,146.3 614,146.6 613,146.3 612,146.2 611,146.5 610,146.2 609,146.7 608,146.2 607,146.7 606,146.3 605,146.2 604,146.0 603,146.3 602,146.5 601,146.5 600,146.0 599,146.3 598,146.3 597,146.7 596,146.6 595,146.4 594,146.3 593,146.5 592,146.5 591,146.3 590,146.1 589,146.2 588,146.1 587,146.3 586,146.7 585,146.6 584,146.1 583,146.5 582,146.3 581,146.8 580,146.5 579,146.8 578,146.5 577,146.2 576,146.3 575,146.1 574,146.4 573,146.4 572,146.4 571,146.3 570,146.6 569,146.3 568,146.4 567,146.1 566,146.7 565,146.2 564,146.5 563,146.0 562,146.8 561,146.6 560,146.5 559,146.4 558,146.2 557,146.6 556,146.1 555,146.1 554,146.3 553,146.5 552,146.5 551,146.6 550,146.5 549,146.8 548,146.1 547,146.6 546,146.2 545,146.1 544,146.5 543,146.6 542,146.4 541,146.0 540,146.2 539,146.1 538,146.4 537,146.4 536,146.6 535,146.3 534,146.5 533,146.3 532,146.1 531,146.2 530,146.3 529,146.7 528,146.4 527,146.6 526,146.5 525,146.5 524,146.8 523,146.7 522,146.7 521,146.4 520,146.3 519,146.3 518,146.6 517,146.5 516,146.2 515,146.4 514,146.6 513,146.4 512,146.7 511,146.4 510,146.7 509,146.1 508,146.6 507,146.2 506,146.2 505,146.6 504,146.5 503,146.8 502,146.5 501,146.4 500,146.4 499,146.2 498,146.6 497,146.7 496,146.3 495,146.6 494,146.0 493,146.5 492,146.7 491,146.5 490,146.5 489,146.1 488,146.3 487,146.2 486,146.6 485,146.6 484,146.4 483,146.0 482,146.4 481,146.4 480,146.0 479,146.1 478,146.3 477,146.2 476,146.2 475,146.1 474,146.7 473,146.2 472,146.2 471,146.4 470,146.1 469,146.4 468,146.2 467,146.0 466,146.5 465,146.3 464,146.0 463,146.2 462,146.4 461,146.6 460,146.8 459,146.3 458,146.2 457,146.2 456,146.3 455,146.3 454,146.3 453,146.3 452,146.8 451,146.0 450,146.4 449,146.2 448,146.7 447,146.4 446,146.4 445,146.6 444,146.8 443,146.2 442,146.7 441,146.5 440,146.6 439,146.6 438,146.8 437,146.7 436,146.4 435,146.7 434,146.3 433,146.6 432,146.3 431,146.4 430,146.1 429,146.4 428,146.2 427,146.4 426,146.7 425,146.2 424,146.1 423,146.2 422,146.3 421,146.1 420,146.2 419,146.3 418,146.6 417,146.6 416,146.6 415,146.8 414,146.6 413,146.1 412,146.5 411,146.5 410,146.2 409,146.4 408,146.5 407,146.7 406,146.4 405,146.8 404,146.3 403,146.4 402,146.2 401,146.1 400,146.6 399,146.4 398,146.7 397,146.6 396,146.6 395,146.1 394,146.2 393,146.7 392,146.6 391,146.0 390,146.7 389,146.4 388,146.2 387,146.6 386,146.4 385,146.4 384,146.1 383,146.3 382,146.6 381,146.1 380,146.3 379,146.6 378,146.1 377,146.6 376,146.3 375,146.3 374,146.5 373,146.5 372,146.6 371,146.2 370,146.7 369,146.1 368,146.0 367,146.2 366,146.1 365,146.3 364,146.4 363,146.1 362,146.1 361,146.4 360,146.5 359,146.4 358,146.3 357,146.3 356,146.7 355,146.2 354,146.8 353,146.4Z" fill="#60ebb4"/><path d="M353 131.700H1098V133.300H353z" fill="#1a2a22"/><path d="M353,132.500 L354.6,133.3 L357.8,133.1 L360.4,132.7 L364.0,131.9 L365.9,133.0 L369.6,132.0 L372.5,132.5 L374.8,133.2 L377.0,133.1 L379.5,131.8 L383.4,131.8 L385.2,131.6 L387.5,131.6 L389.4,133.4 L391.6,132.9 L393.6,131.5 L395.1,131.7 L399.0,132.4 L401.1,131.6 L404.2,132.1 L406.2,132.4 L409.5,132.2 L412.4,131.9 L415.3,131.6 L419.1,133.4 L422.0,132.4 L424.5,133.0 L427.4,132.9 L430.1,132.3 L433.4,131.9 L435.7,132.0 L437.7,133.2 L440.0,133.0 L441.6,133.3 L444.3,133.0 L446.1,132.7 L449.6,132.1 L451.3,132.3 L454.8,133.0 L456.4,132.1 L460.2,132.1 L461.9,133.2 L465.5,132.4 L468.7,133.0 L472.3,131.9 L475.6,133.3 L479.1,132.5 L481.6,133.5 L485.6,133.1 L488.3,133.3 L492.0,132.5 L493.9,132.7 L495.7,132.2 L498.6,132.5 L501.7,133.1 L505.6,132.1 L509.5,132.1 L511.8,133.0 L515.8,132.5 L519.3,133.2 L521.6,132.7 L525.4,131.5 L527.2,133.2 L530.1,132.3 L533.6,132.4 L535.5,132.2 L538.9,132.8 L541.6,131.5 L545.6,131.7 L547.8,133.1 L551.6,132.9 L554.1,133.0 L557.3,132.7 L560.7,132.6 L563.6,132.0 L567.0,131.7 L568.8,132.8 L570.4,133.2 L572.4,132.4 L574.5,132.5 L577.5,131.9 L580.4,133.4 L582.3,131.9 L584.3,131.7 L585.8,133.4 L589.7,131.6 L593.3,132.7 L595.3,133.3 L597.1,132.8 L600.3,132.9 L602.4,131.8 L605.4,132.1 L608.5,133.0 L610.0,133.0 L614.0,132.3 L616.9,132.2 L620.6,131.9 L622.4,132.5 L625.0,132.6 L627.0,133.4 L629.8,132.3 L633.2,131.6 L637.0,133.2 L639.1,132.4 L640.7,133.1 L644.7,132.7 L648.6,132.4 L652.3,133.2 L656.1,132.4 L658.9,131.6 L662.8,131.7 L665.7,132.7 L667.6,132.2 L669.9,131.5 L672.4,132.3 L675.7,132.9 L679.6,133.2 L681.7,132.7 L684.9,133.1 L686.8,132.2 L689.8,132.1 L693.6,132.3 L696.9,131.6 L700.6,133.4 L704.5,132.2 L708.1,133.5 L709.9,131.6 L713.0,133.5 L714.6,133.2 L717.8,132.5 L719.6,132.5 L722.4,131.9 L726.1,133.0 L728.0,132.7 L731.0,133.4 L735.0,133.3 L736.6,132.3 L738.5,133.0 L740.2,133.2 L743.3,132.8 L747.1,133.2 L750.4,132.8 L753.3,132.5 L754.9,131.9 L758.1,132.3 L760.7,133.2 L763.2,133.0 L766.7,133.2 L768.8,132.7 L771.5,132.7 L773.2,131.9 L775.3,133.1 L778.8,132.3 L781.8,132.4 L784.6,132.0 L787.0,133.4 L790.7,131.7 L792.5,133.2 L795.1,132.8 L798.1,132.7 L801.9,131.8 L805.5,132.0 L807.2,132.1 L810.0,133.1 L812.9,133.4 L814.9,132.3 L817.8,132.7 L821.1,132.5 L822.8,133.1 L826.3,131.6 L829.9,131.5 L833.1,132.7 L835.3,131.7 L837.5,132.8 L840.3,133.1 L842.2,132.7 L844.5,131.6 L846.4,131.7 L848.3,131.6 L852.3,132.2 L855.7,132.3 L858.5,132.0 L862.3,131.9 L866.2,133.1 L869.9,131.7 L873.8,132.8 L876.8,132.6 L879.4,133.4 L883.4,133.4 L885.2,132.6 L888.5,131.9 L892.2,133.0 L894.0,132.1 L897.2,133.3 L901.2,132.1 L904.8,132.7 L907.2,132.0 L908.9,131.6 L911.5,131.7 L913.5,132.1 L915.4,131.9 L917.5,133.5 L920.1,132.7 L922.9,133.4 L926.5,133.4 L930.2,133.0 L933.9,132.2 L936.9,132.2 L940.7,132.0 L944.7,132.0 L947.0,133.0 L950.0,131.9 L951.8,133.3 L953.8,132.5 L957.4,132.5 L960.1,131.8 L963.9,132.7 L967.1,132.3 L970.4,132.3 L972.3,132.2 L975.7,133.2 L978.5,132.8 L982.4,132.8 L986.3,132.0 L990.0,133.0 L992.9,132.7 L994.8,131.5 L996.4,133.3 L998.9,132.7 L1001.5,133.3 L1004.8,132.2 L1007.9,131.9 L1011.8,131.8 L1015.6,132.6 L1017.4,133.5 L1019.4,132.9 L1021.6,131.8 L1025.1,133.3 L1028.8,132.8 L1031.9,131.8 L1035.9,132.2 L1039.0,131.6 L1041.3,132.5 L1044.0,132.3 L1046.4,131.5 L1049.5,132.2 L1051.3,132.2 L1054.5,133.0 L1057.0,131.7 L1060.1,132.7 L1062.8,133.4 L1065.2,132.5 L1066.8,131.8 L1068.8,131.9 L1070.7,131.7 L1074.5,132.7 L1077.3,132.6 L1079.5,133.2 L1082.8,132.4" stroke="#12231b" stroke-width="1.300" fill="none"/><path d="M580.500 119v28" stroke="#1a2a22" stroke-width="1.600" stroke-dasharray="5 3 8 3 5"/></g><path d="M1091.500 120v25 M1094.500 122v21" stroke="#8a8a8a" stroke-width="1"/></svg>
<svg style="left:1109px;top:124px;" width="20" height="18" viewBox="0 0 20 18"><circle cx="9" cy="9" r="4" fill="none" stroke="#4f4f4f" stroke-width="1.500"/><path d="M12 12l4 4 M9 0.500v3 M9 14.500v3 M0.500 9h3" stroke="#4f4f4f" stroke-width="1.500"/></svg>
<svg style="left:1139px;top:126px;" width="18" height="15" viewBox="0 0 18 15"><rect x="0.750" y="0.750" width="15.500" height="13" fill="#bdbdbd" stroke="#bdbdbd" stroke-width="1"/><path d="M2 4.500h13 M2 8h13 M2 11.500h13" stroke="#3a3a3a" stroke-width="1.300"/></svg>
<div style="left:352px;top:165px;width:746px;height:26px;background:#1f1f1f;border-top:1px solid #2d2d2d;box-sizing:border-box;"></div>
<svg style="left:0;top:0" width="1600" height="865" viewBox="0 0 1600 865"><path d="M390.7 187V191" stroke="#8a8a8a" stroke-width="1"/><path d="M429.7 184V191" stroke="#a0a0a0" stroke-width="1.200"/><path d="M468.8 187V191" stroke="#8a8a8a" stroke-width="1"/><path d="M507.9 184V191" stroke="#a0a0a0" stroke-width="1.200"/><path d="M546.9 187V191" stroke="#8a8a8a" stroke-width="1"/><path d="M586.0 184V191" stroke="#a0a0a0" stroke-width="1.200"/><path d="M625.1 187V191" stroke="#8a8a8a" stroke-width="1"/><path d="M664.1 184V191" stroke="#a0a0a0" stroke-width="1.200"/><path d="M703.2 187V191" stroke="#8a8a8a" stroke-width="1"/><path d="M742.2 184V191" stroke="#a0a0a0" stroke-width="1.200"/><path d="M781.3 187V191" stroke="#8a8a8a" stroke-width="1"/><path d="M820.4 184V191" stroke="#a0a0a0" stroke-width="1.200"/><path d="M859.4 187V191" stroke="#8a8a8a" stroke-width="1"/><path d="M898.5 184V191" stroke="#a0a0a0" stroke-width="1.200"/><path d="M937.6 187V191" stroke="#8a8a8a" stroke-width="1"/><path d="M976.6 184V191" stroke="#a0a0a0" stroke-width="1.200"/><path d="M1015.7 187V191" stroke="#8a8a8a" stroke-width="1"/><path d="M1054.8 184V191" stroke="#a0a0a0" stroke-width="1.200"/><path d="M1093.8 187V191" stroke="#8a8a8a" stroke-width="1"/></svg>
<span style="left:400.23px;top:167.95px;font-size:11.5px;line-height:17.5px;color:#9c9c9c;width:60px;text-align:center;">0:30</span>
<span style="left:478.36px;top:167.95px;font-size:11.5px;line-height:17.5px;color:#9c9c9c;width:60px;text-align:center;">1:00</span>
<span style="left:556.49px;top:167.95px;font-size:11.5px;line-height:17.5px;color:#9c9c9c;width:60px;text-align:center;">1:30</span>
<span style="left:634.62px;top:167.95px;font-size:11.5px;line-height:17.5px;color:#9c9c9c;width:60px;text-align:center;">2:00</span>
<span style="left:712.75px;top:167.95px;font-size:11.5px;line-height:17.5px;color:#9c9c9c;width:60px;text-align:center;">2:30</span>
<span style="left:790.8800000000001px;top:167.95px;font-size:11.5px;line-height:17.5px;color:#9c9c9c;width:60px;text-align:center;">3:00</span>
<span style="left:869.01px;top:167.95px;font-size:11.5px;line-height:17.5px;color:#9c9c9c;width:60px;text-align:center;">3:30</span>
<span style="left:947.14px;top:167.95px;font-size:11.5px;line-height:17.5px;color:#9c9c9c;width:60px;text-align:center;">4:00</span>
<span style="left:1025.27px;top:167.95px;font-size:11.5px;line-height:17.5px;color:#9c9c9c;width:60px;text-align:center;">4:30</span>
<div style="left:1104px;top:167px;width:21px;height:21px;background:#141414;border:1px solid #2a2a2a;box-sizing:border-box;"></div>
<div style="left:1125px;top:167px;width:21px;height:21px;background:#141414;border:1px solid #2a2a2a;box-sizing:border-box;"></div>
<svg style="left:1108px;top:171px;" width="14" height="14" viewBox="0 0 14 14"><path d="M1.500 12.500v-6a5.200 5.200 0 0 1 10.400 0v6h-3.600v-5.800a1.600 1.600 0 0 0 -3.200 0v5.800z" fill="#3d8be6"/><path d="M1.500 10h3.600 M8.300 10h3.600" stroke="#141414" stroke-width="1"/></svg>
<svg style="left:1130px;top:170px;" width="12" height="16" viewBox="0 0 12 16"><path d="M2 1h8v4.500l-2.500 2.500h-3l-2.500-2.500z" fill="#3d8be6"/><path d="M6 7v8.500" stroke="#3d8be6" stroke-width="1.600"/></svg>
<div style="left:1098px;top:191px;width:75px;height:486px;background:#222222;border-right:1px solid #161616;box-sizing:border-box;"></div>
<div style="left:1098px;top:191px;width:75px;height:1px;background:#191919;"></div>
<div style="left:1098px;top:434px;width:75px;height:1px;background:#484848;"></div>
<span style="left:1105px;top:192.45px;font-size:11.5px;line-height:17.5px;color:#a0a0a0;">dB</span>
<span style="left:1105px;top:219.45px;font-size:11.5px;line-height:17.5px;color:#a0a0a0;">-3</span>
<span style="left:1105px;top:244.45px;font-size:11.5px;line-height:17.5px;color:#a0a0a0;">-6</span>
<span style="left:1105px;top:273.45px;font-size:11.5px;line-height:17.5px;color:#a0a0a0;">-12</span>
<span style="left:1105px;top:289.45px;font-size:11.5px;line-height:17.5px;color:#a0a0a0;">-18</span>
<span style="left:1105px;top:305.45px;font-size:11.5px;line-height:17.5px;color:#a0a0a0;">-∞</span>
<span style="left:1105px;top:320.45px;font-size:11.5px;line-height:17.5px;color:#a0a0a0;">-18</span>
<span style="left:1105px;top:336.45px;font-size:11.5px;line-height:17.5px;color:#a0a0a0;">-12</span>
<span style="left:1105px;top:366.45px;font-size:11.5px;line-height:17.5px;color:#a0a0a0;">-6</span>
<span style="left:1105px;top:390.45px;font-size:11.5px;line-height:17.5px;color:#a0a0a0;">-3</span>
<span style="left:1105px;top:435.45px;font-size:11.5px;line-height:17.5px;color:#a0a0a0;">dB</span>
<span style="left:1105px;top:462.45px;font-size:11.5px;line-height:17.5px;color:#a0a0a0;">-3</span>
<span style="left:1105px;top:487.45px;font-size:11.5px;line-height:17.5px;color:#a0a0a0;">-6</span>
<span style="left:1105px;top:516.45px;font-size:11.5px;line-height:17.5px;color:#a0a0a0;">-12</span>
<span style="left:1105px;top:532.45px;font-size:11.5px;line-height:17.5px;color:#a0a0a0;">-18</span>
<span style="left:1105px;top:548.45px;font-size:11.5px;line-height:17.5px;color:#a0a0a0;">-∞</span>
<span style="left:1105px;top:563.45px;font-size:11.5px;line-height:17.5px;color:#a0a0a0;">-18</span>
<span style="left:1105px;top:579.45px;font-size:11.5px;line-height:17.5px;color:#a0a0a0;">-12</span>
<span style="left:1105px;top:609.45px;font-size:11.5px;line-height:17.5px;color:#a0a0a0;">-6</span>
<span style="left:1105px;top:633.45px;font-size:11.5px;line-height:17.5px;color:#a0a0a0;">-3</span>
<svg style="left:0;top:0" width="1600" height="865" viewBox="0 0 1600 865"><path d="M1098 227.500h5" stroke="#b0b0b0" stroke-width="1.200"/><path d="M1098 252.500h5" stroke="#b0b0b0" stroke-width="1.200"/><path d="M1098 281.500h5" stroke="#b0b0b0" stroke-width="1.200"/><path d="M1098 297.500h5" stroke="#b0b0b0" stroke-width="1.200"/><path d="M1098 313.500h5" stroke="#b0b0b0" stroke-width="1.200"/><path d="M1098 328.500h5" stroke="#b0b0b0" stroke-width="1.200"/><path d="M1098 344.500h5" stroke="#b0b0b0" stroke-width="1.200"/><path d="M1098 374.500h5" stroke="#b0b0b0" stroke-width="1.200"/><path d="M1098 398.500h5" stroke="#b0b0b0" stroke-width="1.200"/><path d="M1098 214.500h2.500" stroke="#8a8a8a" stroke-width="1"/><path d="M1098 240.500h2.500" stroke="#8a8a8a" stroke-width="1"/><path d="M1098 262.500h2.500" stroke="#8a8a8a" stroke-width="1"/><path d="M1098 271.500h2.500" stroke="#8a8a8a" stroke-width="1"/><path d="M1098 287.500h2.500" stroke="#8a8a8a" stroke-width="1"/><path d="M1098 291.500h2.500" stroke="#8a8a8a" stroke-width="1"/><path d="M1098 302.500h2.500" stroke="#8a8a8a" stroke-width="1"/><path d="M1098 306.500h2.500" stroke="#8a8a8a" stroke-width="1"/><path d="M1098 319.500h2.500" stroke="#8a8a8a" stroke-width="1"/><path d="M1098 323.500h2.500" stroke="#8a8a8a" stroke-width="1"/><path d="M1098 334.500h2.500" stroke="#8a8a8a" stroke-width="1"/><path d="M1098 338.500h2.500" stroke="#8a8a8a" stroke-width="1"/><path d="M1098 353.500h2.500" stroke="#8a8a8a" stroke-width="1"/><path d="M1098 363.500h2.500" stroke="#8a8a8a" stroke-width="1"/><path d="M1098 386.500h2.500" stroke="#8a8a8a" stroke-width="1"/><path d="M1098 411.500h2.500" stroke="#8a8a8a" stroke-width="1"/><path d="M1098 470.500h5" stroke="#b0b0b0" stroke-width="1.200"/><path d="M1098 495.500h5" stroke="#b0b0b0" stroke-width="1.200"/><path d="M1098 524.500h5" stroke="#b0b0b0" stroke-width="1.200"/><path d="M1098 540.500h5" stroke="#b0b0b0" stroke-width="1.200"/><path d="M1098 556.500h5" stroke="#b0b0b0" stroke-width="1.200"/><path d="M1098 571.500h5" stroke="#b0b0b0" stroke-width="1.200"/><path d="M1098 587.500h5" stroke="#b0b0b0" stroke-width="1.200"/><path d="M1098 617.500h5" stroke="#b0b0b0" stroke-width="1.200"/><path d="M1098 641.500h5" stroke="#b0b0b0" stroke-width="1.200"/><path d="M1098 457.500h2.500" stroke="#8a8a8a" stroke-width="1"/><path d="M1098 483.500h2.500" stroke="#8a8a8a" stroke-width="1"/><path d="M1098 505.500h2.500" stroke="#8a8a8a" stroke-width="1"/><path d="M1098 514.500h2.500" stroke="#8a8a8a" stroke-width="1"/><path d="M1098 530.500h2.500" stroke="#8a8a8a" stroke-width="1"/><path d="M1098 534.500h2.500" stroke="#8a8a8a" stroke-width="1"/><path d="M1098 545.500h2.500" stroke="#8a8a8a" stroke-width="1"/><path d="M1098 549.500h2.500" stroke="#8a8a8a" stroke-width="1"/><path d="M1098 562.500h2.500" stroke="#8a8a8a" stroke-width="1"/><path d="M1098 566.500h2.500" stroke="#8a8a8a" stroke-width="1"/><path d="M1098 577.500h2.500" stroke="#8a8a8a" stroke-width="1"/><path d="M1098 581.500h2.500" stroke="#8a8a8a" stroke-width="1"/><path d="M1098 596.500h2.500" stroke="#8a8a8a" stroke-width="1"/><path d="M1098 606.500h2.500" stroke="#8a8a8a" stroke-width="1"/><path d="M1098 629.500h2.500" stroke="#8a8a8a" stroke-width="1"/><path d="M1098 654.500h2.500" stroke="#8a8a8a" stroke-width="1"/></svg>
<div style="left:1148px;top:304.5px;width:21px;height:18px;background:#161616;border:1px solid #2a2a2a;box-sizing:border-box;"></div>
<span style="left:1148px;top:305.25px;font-size:10.5px;line-height:16.5px;color:#3d8be6;width:21px;text-align:center;font-weight:bold;">L</span>
<div style="left:1148px;top:547.5px;width:21px;height:18px;background:#161616;border:1px solid #2a2a2a;box-sizing:border-box;"></div>
<span style="left:1148px;top:548.25px;font-size:10.5px;line-height:16.5px;color:#3d8be6;width:21px;text-align:center;font-weight:bold;">R</span>
<div style="left:352px;top:677px;width:821px;height:9px;background:#383838;"></div>
<svg style="left:750px;top:680px;" width="26" height="4" viewBox="0 0 26 4"><rect x="0" y="0" width="1" height="1" fill="#6a6a6a"/><rect x="0" y="2" width="1" height="1" fill="#6a6a6a"/><rect x="2" y="0" width="1" height="1" fill="#6a6a6a"/><rect x="2" y="2" width="1" height="1" fill="#6a6a6a"/><rect x="4" y="0" width="1" height="1" fill="#6a6a6a"/><rect x="4" y="2" width="1" height="1" fill="#6a6a6a"/><rect x="6" y="0" width="1" height="1" fill="#6a6a6a"/><rect x="6" y="2" width="1" height="1" fill="#6a6a6a"/><rect x="8" y="0" width="1" height="1" fill="#6a6a6a"/><rect x="8" y="2" width="1" height="1" fill="#6a6a6a"/><rect x="10" y="0" width="1" height="1" fill="#6a6a6a"/><rect x="10" y="2" width="1" height="1" fill="#6a6a6a"/><rect x="12" y="0" width="1" height="1" fill="#6a6a6a"/><rect x="12" y="2" width="1" height="1" fill="#6a6a6a"/><rect x="14" y="0" width="1" height="1" fill="#6a6a6a"/><rect x="14" y="2" width="1" height="1" fill="#6a6a6a"/><rect x="16" y="0" width="1" height="1" fill="#6a6a6a"/><rect x="16" y="2" width="1" height="1" fill="#6a6a6a"/><rect x="18" y="0" width="1" height="1" fill="#6a6a6a"/><rect x="18" y="2" width="1" height="1" fill="#6a6a6a"/><rect x="20" y="0" width="1" height="1" fill="#6a6a6a"/><rect x="20" y="2" width="1" height="1" fill="#6a6a6a"/><rect x="22" y="0" width="1" height="1" fill="#6a6a6a"/><rect x="22" y="2" width="1" height="1" fill="#6a6a6a"/><rect x="24" y="0" width="1" height="1" fill="#6a6a6a"/><rect x="24" y="2" width="1" height="1" fill="#6a6a6a"/></svg>
<svg style="left:1146px;top:679px;" width="8" height="5" viewBox="0 0 8 5"><path d="M0 4.500l4-4 4 4z" fill="#8a8a8a"/></svg>
<div style="left:660px;top:215px;width:129px;height:27px;background:rgba(40,46,44,0.800);"></div>
<div style="left:660px;top:215px;width:9px;height:27px;background:rgba(120,150,130,0.350);"></div>
<svg style="left:671px;top:219px;" width="18" height="16" viewBox="0 0 18 16"><rect x="0" y="12.5" width="1.300" height="1.5" fill="#a9b5ae"/><rect x="2" y="11.0" width="1.300" height="3.0" fill="#a9b5ae"/><rect x="4" y="9.5" width="1.300" height="4.5" fill="#a9b5ae"/><rect x="6" y="8.0" width="1.300" height="6.0" fill="#a9b5ae"/><rect x="8" y="6.5" width="1.300" height="7.5" fill="#a9b5ae"/><rect x="10" y="5.0" width="1.300" height="9.0" fill="#a9b5ae"/><rect x="12" y="3.5" width="1.300" height="10.5" fill="#a9b5ae"/><rect x="14" y="2.0" width="1.300" height="12.0" fill="#a9b5ae"/><rect x="16" y="0.5" width="1.300" height="13.5" fill="#a9b5ae"/></svg>
<svg style="left:692px;top:219px;" width="20" height="20" viewBox="0 0 20 20"><circle cx="10" cy="10" r="8" fill="none" stroke="#a9b5ae" stroke-width="1.500"/><path d="M10 3.500v6" stroke="#a9b5ae" stroke-width="1.500"/></svg>
<span style="left:715.5px;top:219.75px;font-size:11.5px;line-height:17.5px;color:#3d8be6;font-weight:bold;">+0</span>
<span style="left:733px;top:219.75px;font-size:11.5px;line-height:17.5px;color:#a9b5ae;">dB</span>
<div style="left:770px;top:218px;width:1px;height:21px;background:rgba(140,160,150,0.400);"></div>
<svg style="left:775px;top:223px;" width="12" height="12" viewBox="0 0 12 12"><path d="M6.500 1l4.500 4.500-1.500 0.500-2 2-0.300 2.500-4.200-4.200 2.500-0.300 2-2z" fill="#d5dcd8"/><path d="M4.500 7.500l-3.500 3.500" stroke="#d5dcd8" stroke-width="1.300"/></svg>
<span style="left:356px;top:698.25px;font-size:17.5px;line-height:23.5px;color:#3a7fd6;letter-spacing:-0.450px;">0:45.724</span>
<svg style="left:527px;top:702px;" width="11" height="11" viewBox="0 0 11 11"><rect x="0" y="0" width="10.500" height="10.500" fill="#4d4d4d"/></svg>
<svg style="left:557px;top:701px;" width="12" height="13" viewBox="0 0 12 13"><path d="M0.500 0.500l10.500 6-10.500 6z" fill="#c8c8c8"/></svg>
<svg style="left:589px;top:702px;" width="10" height="11" viewBox="0 0 10 11"><rect x="0.500" y="0" width="2.800" height="11" fill="#444"/><rect x="6" y="0" width="2.800" height="11" fill="#444"/></svg>
<svg style="left:617px;top:702px;" width="14" height="11" viewBox="0 0 14 11"><rect x="0.500" y="0" width="2" height="11" fill="#c8c8c8"/><path d="M13 0v11l-9-5.500z" fill="#c8c8c8"/></svg>
<svg style="left:647px;top:702px;" width="17" height="11" viewBox="0 0 17 11"><path d="M8.500 0.500v10l-8.500-5z M17 0.500v10l-8.500-5z" fill="#c8c8c8"/></svg>
<svg style="left:676px;top:702px;" width="17" height="11" viewBox="0 0 17 11"><path d="M0 0.500v10l8.500-5z M8.500 0.500v10l8.500-5z" fill="#c8c8c8"/></svg>
<svg style="left:709px;top:702px;" width="14" height="11" viewBox="0 0 14 11"><rect x="11.500" y="0" width="2" height="11" fill="#c8c8c8"/><path d="M1 0v11l9-5.500z" fill="#c8c8c8"/></svg>
<svg style="left:739px;top:700px;" width="14" height="14" viewBox="0 0 14 14"><circle cx="7" cy="7" r="6" fill="#f03030"/></svg>
<svg style="left:768px;top:700px;" width="16" height="14" viewBox="0 0 16 14"><path d="M1.200 5.500v6.500h13.600v-6.500" fill="none" stroke="#c8c8c8" stroke-width="2.200"/><path d="M5 9.500v-5h4.500v-3l5 4.300-5 4.300v-3h-2.300v2.400z" fill="#c8c8c8"/></svg>
<svg style="left:798px;top:701px;" width="20" height="13" viewBox="0 0 20 13"><path d="M5 1.500l-4 5 4 5 M8.500 3v7" stroke="#c8c8c8" stroke-width="1.500" fill="none"/><path d="M11 6.500h4 M13.500 3l4.500 3.500-4.500 3.500z" stroke="#c8c8c8" stroke-width="1.300" fill="#c8c8c8"/></svg>
<svg style="left:867px;top:699.5px;" width="20" height="20" viewBox="0 0 20 20"><path d="M2.500 1v15 M0.500 1h4 M0.500 16h4" stroke="#c8c8c8" stroke-width="1.400"/><circle cx="10" cy="8" r="4.300" fill="none" stroke="#c8c8c8" stroke-width="1.500"/><path d="M13 11l4.500 4.500" stroke="#c8c8c8" stroke-width="1.800"/><path d="M7.8 8h4.400" stroke="#c8c8c8" stroke-width="1.200"/><path d="M10 5.8v4.400" stroke="#c8c8c8" stroke-width="1.200"/></svg>
<svg style="left:897px;top:699.5px;" width="20" height="20" viewBox="0 0 20 20"><path d="M2.500 1v15 M0.500 1h4 M0.500 16h4" stroke="#c8c8c8" stroke-width="1.400"/><circle cx="10" cy="8" r="4.300" fill="none" stroke="#c8c8c8" stroke-width="1.500"/><path d="M13 11l4.500 4.500" stroke="#c8c8c8" stroke-width="1.800"/><path d="M7.8 8h4.400" stroke="#c8c8c8" stroke-width="1.200"/></svg>
<svg style="left:927px;top:698.5px;" width="22" height="22" viewBox="0 0 22 22"><path d="M1 1.500h17 M1 0v3.500 M18 0v3.500" stroke="#c8c8c8" stroke-width="1.400"/><circle cx="10" cy="10" r="4.300" fill="none" stroke="#c8c8c8" stroke-width="1.500"/><path d="M13 13l4.500 4.500" stroke="#c8c8c8" stroke-width="1.800"/><path d="M7.8 10h4.400" stroke="#c8c8c8" stroke-width="1.200"/><path d="M10 7.8v4.400" stroke="#c8c8c8" stroke-width="1.200"/></svg>
<svg style="left:958px;top:698.5px;" width="22" height="22" viewBox="0 0 22 22"><path d="M1 1.500h17 M1 0v3.500 M18 0v3.500" stroke="#454545" stroke-width="1.400"/><circle cx="10" cy="10" r="4.300" fill="none" stroke="#454545" stroke-width="1.500"/><path d="M13 13l4.500 4.500" stroke="#454545" stroke-width="1.800"/><path d="M7.8 10h4.400" stroke="#454545" stroke-width="1.200"/></svg>
<svg style="left:988px;top:698.5px;" width="22" height="22" viewBox="0 0 22 22"><path d="M10 0.500v4 M0.500 9.500h4 M16 9.500h3.500" stroke="#454545" stroke-width="1.400"/><circle cx="10" cy="10" r="4.300" fill="none" stroke="#454545" stroke-width="1.500"/><path d="M13 13l4.500 4.500" stroke="#454545" stroke-width="1.800"/></svg>
<svg style="left:1018px;top:700.5px;" width="24" height="20" viewBox="0 0 24 20"><path d="M4.500 1.500l-2.500 3 1.500 3.500-1.500 3.500 2.500 3" stroke="#c8c8c8" stroke-width="1.300" fill="none"/><circle cx="13" cy="8" r="4.300" fill="none" stroke="#c8c8c8" stroke-width="1.500"/><path d="M16 11l4.500 4.500" stroke="#c8c8c8" stroke-width="1.800"/></svg>
<svg style="left:1050px;top:700.5px;" width="24" height="20" viewBox="0 0 24 20"><path d="M2 1.500l2.500 3-1.500 3.500 1.500 3.500-2.500 3" stroke="#c8c8c8" stroke-width="1.300" fill="none"/><circle cx="13" cy="8" r="4.300" fill="none" stroke="#c8c8c8" stroke-width="1.500"/><path d="M16 11l4.500 4.500" stroke="#c8c8c8" stroke-width="1.800"/></svg>
<svg style="left:1077px;top:700.5px;" width="28" height="20" viewBox="0 0 28 20"><path d="M4.500 1.500l-2.500 3 1.500 3.500-1.500 3.500 2.500 3 M7 1.500l2.500 3-1.500 3.500 1.500 3.500-2.500 3" stroke="#c8c8c8" stroke-width="1.300" fill="none"/><circle cx="17" cy="8" r="4.300" fill="none" stroke="#c8c8c8" stroke-width="1.500"/><path d="M20 11l4.500 4.500" stroke="#c8c8c8" stroke-width="1.800"/></svg>
<svg style="left:1112px;top:698.5px;" width="18" height="22" viewBox="0 0 18 22"><circle cx="8.500" cy="11" r="5.500" fill="none" stroke="#c8c8c8" stroke-width="1.600"/><path d="M8.500 7.500v4 M2.500 3.500l5 1-2.500 2.500z" stroke="#c8c8c8" stroke-width="1.300" fill="#c8c8c8"/><path d="M8.500 1v3" stroke="#c8c8c8" stroke-width="1.400"/></svg>
<svg style="left:1142px;top:699.5px;" width="20" height="20" viewBox="0 0 20 20"><path d="M2.500 1v15 M0.500 1h4 M0.500 16h4" stroke="#454545" stroke-width="1.400"/><circle cx="11" cy="9" r="4.300" fill="none" stroke="#454545" stroke-width="1.500"/><path d="M14 12l4.500 4.500" stroke="#454545" stroke-width="1.800"/><path d="M8.8 9h4.400" stroke="#454545" stroke-width="1.200"/><path d="M11 6.8v4.400" stroke="#454545" stroke-width="1.200"/></svg>
<div style="left:344px;top:731px;width:888px;height:102px;background:#232323;"></div>
<span style="left:357px;top:736.25px;font-size:12.5px;line-height:18.5px;color:#d8d8d8;">电平</span>
<svg style="left:392px;top:741px;" width="10" height="10" viewBox="0 0 10 10"><path d="M0 1.500h9 M0 4.500h9 M0 7.500h9" stroke="#c0c0c0" stroke-width="1.1"/></svg>
<div style="left:350px;top:764px;width:877px;height:52px;background:#1b1b1b;border-top:1px solid #111;box-sizing:border-box;"></div>
<div style="left:351px;top:765px;width:1.5px;height:50px;background:#c9b83a;"></div>
<span style="left:380.5px;top:818.25px;font-size:10.5px;line-height:16.5px;color:#8f8f8f;width:40px;text-align:center;">-57</span>
<span style="left:428.18px;top:818.25px;font-size:10.5px;line-height:16.5px;color:#8f8f8f;width:40px;text-align:center;">-54</span>
<span style="left:475.86px;top:818.25px;font-size:10.5px;line-height:16.5px;color:#8f8f8f;width:40px;text-align:center;">-51</span>
<span style="left:523.54px;top:818.25px;font-size:10.5px;line-height:16.5px;color:#8f8f8f;width:40px;text-align:center;">-48</span>
<span style="left:571.22px;top:818.25px;font-size:10.5px;line-height:16.5px;color:#8f8f8f;width:40px;text-align:center;">-45</span>
<span style="left:618.9px;top:818.25px;font-size:10.5px;line-height:16.5px;color:#8f8f8f;width:40px;text-align:center;">-42</span>
<span style="left:666.5799999999999px;top:818.25px;font-size:10.5px;line-height:16.5px;color:#8f8f8f;width:40px;text-align:center;">-39</span>
<span style="left:714.26px;top:818.25px;font-size:10.5px;line-height:16.5px;color:#8f8f8f;width:40px;text-align:center;">-36</span>
<span style="left:761.94px;top:818.25px;font-size:10.5px;line-height:16.5px;color:#8f8f8f;width:40px;text-align:center;">-33</span>
<span style="left:809.62px;top:818.25px;font-size:10.5px;line-height:16.5px;color:#8f8f8f;width:40px;text-align:center;">-30</span>
<span style="left:857.3px;top:818.25px;font-size:10.5px;line-height:16.5px;color:#8f8f8f;width:40px;text-align:center;">-27</span>
<span style="left:904.98px;top:818.25px;font-size:10.5px;line-height:16.5px;color:#8f8f8f;width:40px;text-align:center;">-24</span>
<span style="left:952.66px;top:818.25px;font-size:10.5px;line-height:16.5px;color:#8f8f8f;width:40px;text-align:center;">-21</span>
<span style="left:1000.34px;top:818.25px;font-size:10.5px;line-height:16.5px;color:#8f8f8f;width:40px;text-align:center;">-18</span>
<span style="left:1048.02px;top:818.25px;font-size:10.5px;line-height:16.5px;color:#8f8f8f;width:40px;text-align:center;">-15</span>
<span style="left:1095.7px;top:818.25px;font-size:10.5px;line-height:16.5px;color:#8f8f8f;width:40px;text-align:center;">-12</span>
<span style="left:1143.38px;top:818.25px;font-size:10.5px;line-height:16.5px;color:#8f8f8f;width:40px;text-align:center;">-9</span>
<span style="left:1191.06px;top:818.25px;font-size:10.5px;line-height:16.5px;color:#8f8f8f;width:40px;text-align:center;">-6</span>
<span style="left:1238.74px;top:818.25px;font-size:10.5px;line-height:16.5px;color:#8f8f8f;width:40px;text-align:center;">-3</span>
<svg style="left:0;top:0" width="1600" height="865" viewBox="0 0 1600 865"><path d="M400.5 814v4" stroke="#9a9a9a" stroke-width="1.200"/><path d="M416.4 815v2" stroke="#8a8a8a" stroke-width="1"/><path d="M432.3 815v2" stroke="#8a8a8a" stroke-width="1"/><path d="M448.2 814v4" stroke="#9a9a9a" stroke-width="1.200"/><path d="M464.1 815v2" stroke="#8a8a8a" stroke-width="1"/><path d="M480.0 815v2" stroke="#8a8a8a" stroke-width="1"/><path d="M495.9 814v4" stroke="#9a9a9a" stroke-width="1.200"/><path d="M511.8 815v2" stroke="#8a8a8a" stroke-width="1"/><path d="M527.6 815v2" stroke="#8a8a8a" stroke-width="1"/><path d="M543.5 814v4" stroke="#9a9a9a" stroke-width="1.200"/><path d="M559.4 815v2" stroke="#8a8a8a" stroke-width="1"/><path d="M575.3 815v2" stroke="#8a8a8a" stroke-width="1"/><path d="M591.2 814v4" stroke="#9a9a9a" stroke-width="1.200"/><path d="M607.1 815v2" stroke="#8a8a8a" stroke-width="1"/><path d="M623.0 815v2" stroke="#8a8a8a" stroke-width="1"/><path d="M638.9 814v4" stroke="#9a9a9a" stroke-width="1.200"/><path d="M654.8 815v2" stroke="#8a8a8a" stroke-width="1"/><path d="M670.7 815v2" stroke="#8a8a8a" stroke-width="1"/><path d="M686.6 814v4" stroke="#9a9a9a" stroke-width="1.200"/><path d="M702.5 815v2" stroke="#8a8a8a" stroke-width="1"/><path d="M718.4 815v2" stroke="#8a8a8a" stroke-width="1"/><path d="M734.3 814v4" stroke="#9a9a9a" stroke-width="1.200"/><path d="M750.2 815v2" stroke="#8a8a8a" stroke-width="1"/><path d="M766.0 815v2" stroke="#8a8a8a" stroke-width="1"/><path d="M781.9 814v4" stroke="#9a9a9a" stroke-width="1.200"/><path d="M797.8 815v2" stroke="#8a8a8a" stroke-width="1"/><path d="M813.7 815v2" stroke="#8a8a8a" stroke-width="1"/><path d="M829.6 814v4" stroke="#9a9a9a" stroke-width="1.200"/><path d="M845.5 815v2" stroke="#8a8a8a" stroke-width="1"/><path d="M861.4 815v2" stroke="#8a8a8a" stroke-width="1"/><path d="M877.3 814v4" stroke="#9a9a9a" stroke-width="1.200"/><path d="M893.2 815v2" stroke="#8a8a8a" stroke-width="1"/><path d="M909.1 815v2" stroke="#8a8a8a" stroke-width="1"/><path d="M925.0 814v4" stroke="#9a9a9a" stroke-width="1.200"/><path d="M940.9 815v2" stroke="#8a8a8a" stroke-width="1"/><path d="M956.8 815v2" stroke="#8a8a8a" stroke-width="1"/><path d="M972.7 814v4" stroke="#9a9a9a" stroke-width="1.200"/><path d="M988.6 815v2" stroke="#8a8a8a" stroke-width="1"/><path d="M1004.4 815v2" stroke="#8a8a8a" stroke-width="1"/><path d="M1020.3 814v4" stroke="#9a9a9a" stroke-width="1.200"/><path d="M1036.2 815v2" stroke="#8a8a8a" stroke-width="1"/><path d="M1052.1 815v2" stroke="#8a8a8a" stroke-width="1"/><path d="M1068.0 814v4" stroke="#9a9a9a" stroke-width="1.200"/><path d="M1083.9 815v2" stroke="#8a8a8a" stroke-width="1"/><path d="M1099.8 815v2" stroke="#8a8a8a" stroke-width="1"/><path d="M1115.7 814v4" stroke="#9a9a9a" stroke-width="1.200"/><path d="M1131.6 815v2" stroke="#8a8a8a" stroke-width="1"/><path d="M1147.5 815v2" stroke="#8a8a8a" stroke-width="1"/><path d="M1163.4 814v4" stroke="#9a9a9a" stroke-width="1.200"/><path d="M1179.3 815v2" stroke="#8a8a8a" stroke-width="1"/><path d="M1195.2 815v2" stroke="#8a8a8a" stroke-width="1"/><path d="M1211.1 814v4" stroke="#9a9a9a" stroke-width="1.200"/><path d="M1258.7 814v4" stroke="#9a9a9a" stroke-width="1.200"/><path d="M368.5 815v2" stroke="#8a8a8a" stroke-width="1"/><path d="M384.5 815v2" stroke="#8a8a8a" stroke-width="1"/><path d="M352.500 814v4" stroke="#9a9a9a" stroke-width="1.200"/><path d="M1226 824l4 2-2 2z" fill="#c8c8c8"/></svg>
<span style="left:351px;top:818.25px;font-size:10.5px;line-height:16.5px;color:#8f8f8f;">dB</span>
<div style="left:1184px;top:80px;width:409px;height:646px;background:#232323;"></div>
<span style="left:1197px;top:86.75px;font-size:12.5px;line-height:18.5px;color:#d8d8d8;">基本声音</span>
<svg style="left:1257px;top:92px;" width="10" height="10" viewBox="0 0 10 10"><path d="M0 1.500h9 M0 4.500h9 M0 7.500h9" stroke="#c0c0c0" stroke-width="1.1"/></svg>
<div style="left:1184px;top:110px;width:409px;height:1px;background:#2a2a2a;"></div>
<span style="left:1197px;top:120.25px;font-size:12.5px;line-height:18.5px;color:#858585;font-style:italic;">无选择项</span>
<div style="left:1184px;top:142px;width:409px;height:1px;background:#2a2a2a;"></div>
<span style="left:1197px;top:150.5px;font-size:12px;line-height:18px;color:#3c3c3c;">预设:</span>
<div style="left:1231px;top:147.5px;width:350px;height:23px;background:#292929;border-radius:2px;"></div>
<svg style="left:1566px;top:156px;" width="10" height="7" viewBox="0 0 10 7"><path d="M1 1l4 4 4-4" stroke="#3c3c3c" stroke-width="1.400" fill="none"/></svg>
<div style="left:1184px;top:180px;width:409px;height:1px;background:#2a2a2a;"></div>
<div style="left:1184px;top:211px;width:409px;height:1px;background:#292929;"></div>
<div style="left:1583px;top:405.5px;width:10px;height:59px;background:#33334a;border-radius:3px 0 0 3px;border:1px solid #2a2a30;box-sizing:border-box;"></div>
<div style="left:1586px;top:421px;width:5px;height:40px;background:repeating-linear-gradient(rgba(0,0,0,0) 0,rgba(0,0,0,0) 1.500px,rgba(30,30,50,0.500) 1.500px,rgba(30,30,50,0.500) 2.200px),linear-gradient(#c89a44,#b8b040 40%,#6aa860 70%,#3aa898);opacity:0.700"></div>
<div style="left:1354px;top:696px;width:7px;height:1px;background:#8a8a8a;"></div>
<div style="left:1232px;top:731px;width:361px;height:102px;background:#232323;"></div>
<svg style="left:0;top:0" width="1600" height="865" viewBox="0 0 1600 865"><path d="M1332 773h70c-3 6-12 10-24 10-5-4-10-4-15 0-14 0-26-4-31-10z" fill="#e6e6e6"/><rect x="1414" y="776" width="16" height="7" fill="#d8d8d8"/><rect x="1434" y="776" width="27" height="7" fill="#d8d8d8"/><rect x="1465" y="776" width="14" height="7" fill="#d8d8d8"/><rect x="1479" y="773" width="28" height="5" fill="#d8d8d8"/><path d="M1320 818h5v5h-5z" fill="#e6e6e6"/></svg>
<span style="left:1326px;top:788.7px;font-size:35.5px;line-height:40px;color:#e9e9e9;letter-spacing:-0.300px;-webkit-text-stroke:0.500px #e9e9e9;">n.baidu.com</span>
<span style="left:1340px;top:781.75px;font-size:12.5px;line-height:18.5px;color:#8a8a8a;">选区</span>
<span style="left:1340px;top:803.75px;font-size:12.5px;line-height:18.5px;color:#8a8a8a;">视图</span>
<span style="left:1519px;top:761px;font-size:12px;line-height:18px;color:#8a8a8a;">持续时间</span>
<div style="left:1515px;top:758px;width:40px;height:20px;background:rgba(35,35,35,0.800);"></div>
<div style="left:1515px;top:758px;width:60px;height:8px;background:rgba(35,35,35,0.900);"></div>
<span style="left:1372px;top:782.25px;font-size:11.5px;line-height:17.5px;color:#3a7fd6;">0:45.724</span>
<span style="left:1372px;top:804.25px;font-size:11.5px;line-height:17.5px;color:#3a7fd6;">0:00.000</span>
<span style="left:1446px;top:782.25px;font-size:11.5px;line-height:17.5px;color:#3a7fd6;">0:45.724</span>
<span style="left:1446px;top:804.25px;font-size:11.5px;line-height:17.5px;color:#3a7fd6;">4:46.275</span>
<span style="left:1519px;top:782.25px;font-size:11.5px;line-height:17.5px;color:#3a7fd6;">0:00.000</span>
<span style="left:1519px;top:804.25px;font-size:11.5px;line-height:17.5px;color:#3a7fd6;">4:46.275</span>
<div style="left:220px;top:52px;width:271.5px;height:463px;background:#f2f2f2;box-shadow:2px 2px 4px rgba(0,0,0,0.450);border:1px solid #d0d0d0;box-sizing:border-box;"></div>
<span style="left:250.5px;top:56.35px;font-size:12.3px;line-height:18.3px;color:#000;">显示效果组(W)</span>
<span style="left:372px;top:56.35px;font-size:12.3px;line-height:18.3px;color:#000;width:101.500px;text-align:right;letter-spacing:0.900px;">Alt+0</span>
<span style="left:250.5px;top:76.35px;font-size:12.3px;line-height:18.3px;color:#8d8d8d;">编辑效果组内的剪辑效果(F)</span>
<span style="left:250.5px;top:96.35px;font-size:12.3px;line-height:18.3px;color:#8d8d8d;">编辑效果组内的音轨效果(T)</span>
<div style="left:250px;top:116.3px;width:239px;height:1px;background:#d9d9d9;"></div>
<span style="left:250.5px;top:121.35px;font-size:12.3px;line-height:18.3px;color:#000;">反相(I)</span>
<span style="left:250.5px;top:141.35px;font-size:12.3px;line-height:18.3px;color:#000;">反向(R)</span>
<span style="left:250.5px;top:161.35px;font-size:12.3px;line-height:18.3px;color:#8d8d8d;">静音(S)</span>
<span style="left:250.5px;top:181.35px;font-size:12.3px;line-height:18.3px;color:#000;">生成(G)</span>
<svg style="left:476px;top:184.8px;" width="7" height="10" viewBox="0 0 7 10"><path d="M1.800 1.200l3.200 3.600-3.200 3.600" stroke="#555" stroke-width="1.200" fill="none"/></svg>
<div style="left:250px;top:201.3px;width:239px;height:1px;background:#d9d9d9;"></div>
<span style="left:250.5px;top:206.35px;font-size:12.3px;line-height:18.3px;color:#000;">匹配响度(M)</span>
<span style="left:250.5px;top:226.35px;font-size:12.3px;line-height:18.3px;color:#8d8d8d;">自动修复选区(H)</span>
<span style="left:372px;top:226.35px;font-size:12.3px;line-height:18.3px;color:#8d8d8d;width:101.500px;text-align:right;letter-spacing:0.900px;">Ctrl+U</span>
<div style="left:250px;top:246.3px;width:239px;height:1px;background:#d9d9d9;"></div>
<span style="left:250.5px;top:251.35px;font-size:12.3px;line-height:18.3px;color:#000;">振幅与压限(A)</span>
<svg style="left:476px;top:254.8px;" width="7" height="10" viewBox="0 0 7 10"><path d="M1.800 1.200l3.200 3.600-3.200 3.600" stroke="#555" stroke-width="1.200" fill="none"/></svg>
<span style="left:250.5px;top:271.35px;font-size:12.3px;line-height:18.3px;color:#000;">延迟与回声(L)</span>
<svg style="left:476px;top:274.8px;" width="7" height="10" viewBox="0 0 7 10"><path d="M1.800 1.200l3.200 3.600-3.200 3.600" stroke="#555" stroke-width="1.200" fill="none"/></svg>
<span style="left:250.5px;top:291.35px;font-size:12.3px;line-height:18.3px;color:#000;">诊断(D)</span>
<svg style="left:476px;top:294.8px;" width="7" height="10" viewBox="0 0 7 10"><path d="M1.800 1.200l3.200 3.600-3.200 3.600" stroke="#555" stroke-width="1.200" fill="none"/></svg>
<span style="left:250.5px;top:311.35px;font-size:12.3px;line-height:18.3px;color:#000;">滤波与均衡(Q)</span>
<svg style="left:476px;top:314.8px;" width="7" height="10" viewBox="0 0 7 10"><path d="M1.800 1.200l3.200 3.600-3.200 3.600" stroke="#555" stroke-width="1.200" fill="none"/></svg>
<span style="left:250.5px;top:331.35px;font-size:12.3px;line-height:18.3px;color:#000;">调制(U)</span>
<svg style="left:476px;top:334.8px;" width="7" height="10" viewBox="0 0 7 10"><path d="M1.800 1.200l3.200 3.600-3.200 3.600" stroke="#555" stroke-width="1.200" fill="none"/></svg>
<span style="left:250.5px;top:351.35px;font-size:12.3px;line-height:18.3px;color:#000;">降噪/恢复(N)</span>
<svg style="left:476px;top:354.8px;" width="7" height="10" viewBox="0 0 7 10"><path d="M1.800 1.200l3.200 3.600-3.200 3.600" stroke="#555" stroke-width="1.200" fill="none"/></svg>
<span style="left:250.5px;top:371.35px;font-size:12.3px;line-height:18.3px;color:#000;">混响(B)</span>
<svg style="left:476px;top:374.8px;" width="7" height="10" viewBox="0 0 7 10"><path d="M1.800 1.200l3.200 3.600-3.200 3.600" stroke="#555" stroke-width="1.200" fill="none"/></svg>
<span style="left:250.5px;top:391.35px;font-size:12.3px;line-height:18.3px;color:#000;">特殊效果(C)</span>
<svg style="left:476px;top:394.8px;" width="7" height="10" viewBox="0 0 7 10"><path d="M1.800 1.200l3.200 3.600-3.200 3.600" stroke="#555" stroke-width="1.200" fill="none"/></svg>
<span style="left:250.5px;top:411.35px;font-size:12.3px;line-height:18.3px;color:#000;">立体声声像(O)</span>
<svg style="left:476px;top:414.8px;" width="7" height="10" viewBox="0 0 7 10"><path d="M1.800 1.200l3.200 3.600-3.200 3.600" stroke="#555" stroke-width="1.200" fill="none"/></svg>
<span style="left:250.5px;top:431.35px;font-size:12.3px;line-height:18.3px;color:#000;">时间与变调(E)</span>
<svg style="left:476px;top:434.8px;" width="7" height="10" viewBox="0 0 7 10"><path d="M1.800 1.200l3.200 3.600-3.200 3.600" stroke="#555" stroke-width="1.200" fill="none"/></svg>
<div style="left:250px;top:451.3px;width:239px;height:1px;background:#d9d9d9;"></div>
<span style="left:250.5px;top:456.35px;font-size:12.3px;line-height:18.3px;color:#000;">VST(V)</span>
<svg style="left:476px;top:459.8px;" width="7" height="10" viewBox="0 0 7 10"><path d="M1.800 1.200l3.200 3.600-3.200 3.600" stroke="#555" stroke-width="1.200" fill="none"/></svg>
<span style="left:250.5px;top:476.35px;font-size:12.3px;line-height:18.3px;color:#000;">批处理(S)</span>
<svg style="left:476px;top:479.8px;" width="7" height="10" viewBox="0 0 7 10"><path d="M1.800 1.200l3.200 3.600-3.200 3.600" stroke="#555" stroke-width="1.200" fill="none"/></svg>
<div style="left:221px;top:493.7px;width:269.5px;height:20px;background:#91c9f7;"></div>
<span style="left:250.5px;top:496.35px;font-size:12.3px;line-height:18.3px;color:#000;">音频增效工具管理器(P)...</span>
<div style="left:240px;top:496px;width:208px;height:19.5px;background:transparent;border:1.500px solid #d0202a;box-sizing:border-box;"></div>
<svg style="left:0;top:0" width="1600" height="865" viewBox="0 0 1600 865"><path d="M249.400 652L275.500 541" stroke="#42c2f0" stroke-width="2.400" fill="none"/><path d="M279.600 526.500L268.300 539L284 543.300z" fill="#42c2f0"/></svg>
</body></html>
